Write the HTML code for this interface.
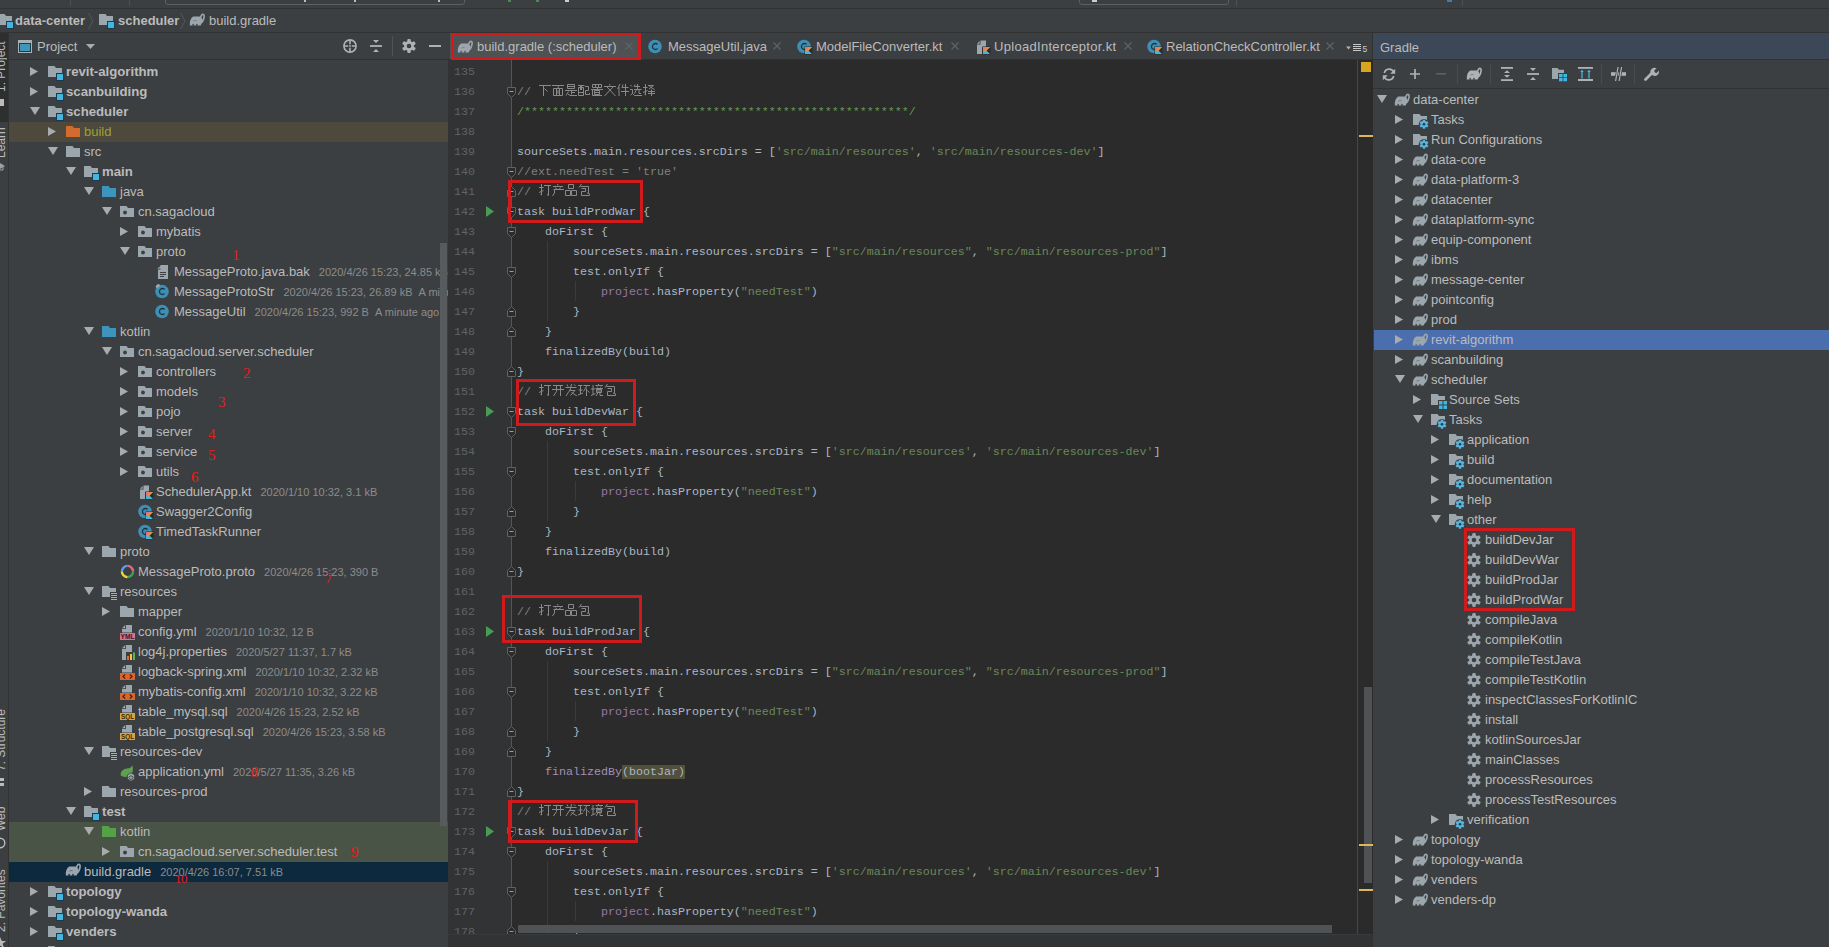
<!DOCTYPE html><html><head><meta charset="utf-8"><style>

*{margin:0;padding:0;box-sizing:border-box}
html,body{width:1829px;height:947px;overflow:hidden;background:#3c3f41;font-family:"Liberation Sans", sans-serif;}
.a{position:absolute}
.t{position:absolute;white-space:nowrap;font-size:13px;line-height:20px;height:20px;color:#bbbbbb}
.b{font-weight:bold;font-size:13.2px}
.i{font-size:11px;color:#8c8c8c}
.c{position:absolute;white-space:pre;font-family:"Liberation Mono", monospace;font-size:11.67px;line-height:20px;height:20px;color:#a9b7c6;left:517px}
.ln{position:absolute;width:40px;left:435px;text-align:right;font-family:"Liberation Mono", monospace;font-size:11.67px;line-height:20px;color:#606366}
.cj{font-size:12.7px;letter-spacing:0px} .cm{color:#808080} .dc{color:#629755} .st{color:#6a8759} .pp{color:#9876aa}
.rb{position:absolute;border:3px solid #d01a1c}
.rn{position:absolute;color:#e81c1c;font-family:"Liberation Serif",serif;font-size:15px;line-height:15px}

</style></head><body>
<div class="a" style="left:0;top:0;width:1829px;height:8px;background:#3c3f41"></div>
<div class="a" style="left:0;top:8px;width:1829px;height:1px;background:#323232"></div>
<div class="a" style="left:0;top:9px;width:1829px;height:23px;background:#3c3f41"></div>
<div class="a" style="left:0;top:32px;width:1829px;height:1px;background:#323232"></div>
<div class="a" style="left:0;top:33px;width:8px;height:914px;background:#3c3f41"></div>
<div class="a" style="left:0;top:33px;width:8px;height:89px;background:#2d2f30"></div>
<div class="a" style="left:8px;top:33px;width:1px;height:914px;background:#323232"></div>
<div class="a" style="left:9px;top:33px;width:439px;height:26px;background:#3c3f41"></div>
<div class="a" style="left:9px;top:59px;width:439px;height:1px;background:#323232"></div>
<div class="a" style="left:448px;top:33px;width:925px;height:26px;background:#3c3f41"></div>
<div class="a" style="left:448px;top:59px;width:925px;height:1px;background:#323232"></div>
<div class="a" style="left:448px;top:60px;width:64px;height:874px;background:#313335"></div>
<div class="a" style="left:512px;top:60px;width:861px;height:874px;background:#2b2b2b"></div>
<div class="a" style="left:1373px;top:33px;width:456px;height:26px;background:#3c4757"></div>
<div class="a" style="left:1373px;top:59px;width:456px;height:1px;background:#323232"></div>
<div class="a" style="left:1372px;top:33px;width:1px;height:914px;background:#323232"></div>
<div class="a" style="left:1373px;top:88px;width:456px;height:1px;background:#323232"></div>
<svg style="position:absolute;left:-2px;top:14px" width="16" height="15" viewBox="0 0 16 15"><path d="M0 0H6.5L8 2H14V11H0Z" fill="#9ca6ad"/><rect x="8.5" y="7.5" width="7" height="7" fill="#40b6e0" stroke="#1e3a4a" stroke-width="1"/></svg>
<div class="t b" style="left:15px;top:11px;font-size:13px">data-center</div>
<svg style="position:absolute;left:88px;top:12px" width="6" height="18" viewBox="0 0 6 18"><path d="M0.5 1L5 9L0.5 17" stroke="#55585a" fill="none"/></svg>
<svg style="position:absolute;left:99px;top:14px" width="16" height="15" viewBox="0 0 16 15"><path d="M0 0H6.5L8 2H14V11H0Z" fill="#9ca6ad"/><rect x="8.5" y="7.5" width="7" height="7" fill="#40b6e0" stroke="#1e3a4a" stroke-width="1"/></svg>
<div class="t b" style="left:118px;top:11px;font-size:13px">scheduler</div>
<svg style="position:absolute;left:180px;top:12px" width="6" height="18" viewBox="0 0 6 18"><path d="M0.5 1L5 9L0.5 17" stroke="#55585a" fill="none"/></svg>
<svg style="position:absolute;left:189px;top:13px" width="16" height="14" viewBox="0 0 16 14"><path d="M0.8 12.4C0.4 9 1.5 5.2 4.2 3.6L10.6 3.4C12.4 3.8 13.6 5.6 13.6 7.6L12.8 10.2L11.6 12.4Z" fill="#9ca6ad"/><path d="M11.6 4.4C12.1 2.3 13 1.2 14 1.2C15 1.3 15.3 2.6 15 4.4C14.7 6.5 14.1 8 13 9.5" fill="none" stroke="#9ca6ad" stroke-width="1.6"/><g fill="#3c3f41"><rect x="3.5" y="10.9" width="1.3" height="2"/><rect x="7.3" y="10.9" width="1.3" height="2"/></g><path d="M4.3 8.2Q5.8 7.2 7.6 7.6" stroke="#3c3f41" stroke-width="0.8" fill="none" opacity="0.5"/></svg>
<div class="t" style="left:208px;top:11px;left:209px">build.gradle</div>
<div class="a" style="left:70px;top:0;width:1px;height:6px;background:#4f5254"></div>
<div class="a" style="left:129px;top:0;width:1px;height:6px;background:#4f5254"></div>
<div class="a" style="left:165px;top:-6px;width:300px;height:11px;border:1px solid #5e6060;border-radius:3px"></div>
<div class="a" style="left:304px;top:0;width:2px;height:2px;background:#bbbbbb"></div>
<div class="a" style="left:354px;top:0;width:2px;height:2px;background:#bbbbbb"></div>
<div class="a" style="left:438px;top:0;width:2px;height:2px;background:#bbbbbb"></div>
<div class="a" style="left:508px;top:0;width:3px;height:2px;background:#4a8a4e"></div>
<div class="a" style="left:536px;top:0;width:3px;height:2px;background:#4a8a4e"></div>
<div class="a" style="left:565px;top:0;width:4px;height:2px;background:#cccccc"></div>
<div class="a" style="left:1079px;top:-6px;width:150px;height:11px;border:1px solid #5e6060;border-radius:3px"></div>
<div class="a" style="left:1092px;top:0;width:5px;height:2px;background:#cccccc"></div>
<div class="a" style="left:1447px;top:0;width:5px;height:2px;background:#3d7fa8"></div>
<div class="a" style="left:1236px;top:0;width:1px;height:6px;background:#4f5254"></div>
<div class="a" style="left:1462px;top:0;width:1px;height:6px;background:#4f5254"></div>
<div class="a" style="left:0;top:0;width:8px;height:947px;overflow:hidden">
<div class="a" style="left:-5px;top:36px;width:12px;height:56px;writing-mode:vertical-rl;transform:rotate(180deg);font-size:12px;line-height:12px;color:#bbbbbb;white-space:nowrap;overflow:hidden">1: Project</div>
<div class="a" style="left:0;top:99px;width:4px;height:7px;background:#bbbbbb"></div>
<div class="a" style="left:-5px;top:126px;width:12px;height:32px;writing-mode:vertical-rl;transform:rotate(180deg);font-size:12px;line-height:12px;color:#bbbbbb;white-space:nowrap;overflow:hidden">Learn</div>
<svg style="position:absolute;left:-6px;top:162px" width="12" height="9" viewBox="0 0 12 9"><path d="M1 4L6 1L11 4L6 7Z" fill="#a0a0a0"/><path d="M3 5V8H9V5" stroke="#a0a0a0" fill="none"/></svg>
<div class="a" style="left:-5px;top:707px;width:12px;height:64px;writing-mode:vertical-rl;transform:rotate(180deg);font-size:12px;line-height:12px;color:#bbbbbb;white-space:nowrap;overflow:hidden">7: Structure</div>
<div class="a" style="left:0;top:778px;width:4px;height:3px;background:#bbbbbb"></div><div class="a" style="left:0;top:783px;width:4px;height:3px;background:#bbbbbb"></div>
<div class="a" style="left:-5px;top:807px;width:12px;height:24px;writing-mode:vertical-rl;transform:rotate(180deg);font-size:12px;line-height:12px;color:#bbbbbb;white-space:nowrap;overflow:hidden">Web</div>
<svg style="position:absolute;left:-6px;top:837px" width="12" height="12" viewBox="0 0 12 12"><circle cx="6" cy="6" r="4.8" fill="none" stroke="#bbbbbb" stroke-width="1.4"/></svg>
<div class="a" style="left:-5px;top:868px;width:12px;height:64px;writing-mode:vertical-rl;transform:rotate(180deg);font-size:12px;line-height:12px;color:#bbbbbb;white-space:nowrap;overflow:hidden">2: Favorites</div>
<svg style="position:absolute;left:-6px;top:937px" width="12" height="12" viewBox="0 0 12 12"><path d="M6 0L7.8 4H12L8.6 6.8L10 11L6 8.5L2 11L3.4 6.8L0 4H4.2Z" fill="#bbbbbb"/></svg>
</div>
<svg style="position:absolute;left:18px;top:40px" width="14" height="13" viewBox="0 0 14 13"><rect x="0" y="0" width="14" height="13" fill="#a9b0b4"/><rect x="1" y="3" width="12" height="9" fill="#1f3a4a"/><rect x="2" y="4" width="10" height="7" fill="#3d97b8"/></svg>
<div class="t" style="left:37px;top:37px">Project</div>
<svg style="position:absolute;left:86px;top:44px" width="9" height="5" viewBox="0 0 9 5"><path d="M0 0H9L4.5 5Z" fill="#a9abad"/></svg>
<svg style="position:absolute;left:343px;top:39px" width="14" height="14" viewBox="0 0 14 14"><circle cx="7" cy="7" r="6.1" fill="none" stroke="#afb1b3" stroke-width="1.6"/><path d="M7 1V5.2M7 8.8V13M1 7H5.2M8.8 7H13" stroke="#afb1b3" stroke-width="1.6"/><circle cx="7" cy="7" r="0.9" fill="#afb1b3"/></svg>
<svg style="position:absolute;left:370px;top:39px" width="12" height="14" viewBox="0 0 12 14"><rect x="0" y="6.1" width="12" height="1.8" fill="#afb1b3"/><path d="M3 1H9L6 4Z M3 13H9L6 10Z" fill="#afb1b3"/></svg>
<div class="a" style="left:392px;top:36px;width:1px;height:20px;background:#505355"></div>
<svg style="position:absolute;left:402px;top:39px" width="14" height="14" viewBox="0 0 14 14"><circle cx="7" cy="7" r="4.9" fill="#afb1b3"/><rect x="5.3" y="0" width="3.4" height="14" rx="1" fill="#afb1b3" transform="rotate(0.0 7 7)"/><rect x="5.3" y="0" width="3.4" height="14" rx="1" fill="#afb1b3" transform="rotate(60.0 7 7)"/><rect x="5.3" y="0" width="3.4" height="14" rx="1" fill="#afb1b3" transform="rotate(120.0 7 7)"/><circle cx="7" cy="7" r="2.3" fill="#3c3f41"/></svg>
<div class="a" style="left:429px;top:45px;width:12px;height:2px;background:#afb1b3"></div>
<div class="a" style="left:9px;top:60px;width:439px;height:887px;overflow:hidden">
<div class="a" style="left:0;top:62px;width:439px;height:20px;background:#4d4a3d"></div>
<div class="a" style="left:0;top:762px;width:439px;height:40px;background:#4a5446"></div>
<div class="a" style="left:0;top:802px;width:439px;height:20px;background:#0d293e"></div>
<svg style="position:absolute;left:21px;top:7px" width="8" height="9" viewBox="0 0 8 9"><path d="M0 0L8 4.5L0 9Z" fill="#a9abad"/></svg>
<svg style="position:absolute;left:39px;top:6px" width="16" height="15" viewBox="0 0 16 15"><path d="M0 0H6.5L8 2H14V11H0Z" fill="#9ca6ad"/><rect x="8.5" y="7.5" width="7" height="7" fill="#40b6e0" stroke="#1e3a4a" stroke-width="1"/></svg>
<div class="t b" style="left:57px;top:2px;">revit-algorithm</div>
<svg style="position:absolute;left:21px;top:27px" width="8" height="9" viewBox="0 0 8 9"><path d="M0 0L8 4.5L0 9Z" fill="#a9abad"/></svg>
<svg style="position:absolute;left:39px;top:26px" width="16" height="15" viewBox="0 0 16 15"><path d="M0 0H6.5L8 2H14V11H0Z" fill="#9ca6ad"/><rect x="8.5" y="7.5" width="7" height="7" fill="#40b6e0" stroke="#1e3a4a" stroke-width="1"/></svg>
<div class="t b" style="left:57px;top:22px;">scanbuilding</div>
<svg style="position:absolute;left:21px;top:47px" width="10" height="8" viewBox="0 0 10 8"><path d="M0 0H10L5 8Z" fill="#a9abad"/></svg>
<svg style="position:absolute;left:39px;top:46px" width="16" height="15" viewBox="0 0 16 15"><path d="M0 0H6.5L8 2H14V11H0Z" fill="#9ca6ad"/><rect x="8.5" y="7.5" width="7" height="7" fill="#40b6e0" stroke="#1e3a4a" stroke-width="1"/></svg>
<div class="t b" style="left:57px;top:42px;">scheduler</div>
<svg style="position:absolute;left:39px;top:67px" width="8" height="9" viewBox="0 0 8 9"><path d="M0 0L8 4.5L0 9Z" fill="#a9abad"/></svg>
<svg style="position:absolute;left:57px;top:66px" width="14" height="11" viewBox="0 0 14 11"><path d="M0 0H6.5L8 2H14V11H0Z" fill="#d46b2e"/></svg>
<div class="t" style="left:75px;top:62px;color:#9da12e;">build</div>
<svg style="position:absolute;left:39px;top:87px" width="10" height="8" viewBox="0 0 10 8"><path d="M0 0H10L5 8Z" fill="#a9abad"/></svg>
<svg style="position:absolute;left:57px;top:86px" width="14" height="11" viewBox="0 0 14 11"><path d="M0 0H6.5L8 2H14V11H0Z" fill="#9ca6ad"/></svg>
<div class="t" style="left:75px;top:82px;">src</div>
<svg style="position:absolute;left:57px;top:107px" width="10" height="8" viewBox="0 0 10 8"><path d="M0 0H10L5 8Z" fill="#a9abad"/></svg>
<svg style="position:absolute;left:75px;top:106px" width="16" height="15" viewBox="0 0 16 15"><path d="M0 0H6.5L8 2H14V11H0Z" fill="#9ca6ad"/><rect x="8.5" y="7.5" width="7" height="7" fill="#40b6e0" stroke="#1e3a4a" stroke-width="1"/></svg>
<div class="t b" style="left:93px;top:102px;">main</div>
<svg style="position:absolute;left:75px;top:127px" width="10" height="8" viewBox="0 0 10 8"><path d="M0 0H10L5 8Z" fill="#a9abad"/></svg>
<svg style="position:absolute;left:93px;top:126px" width="14" height="11" viewBox="0 0 14 11"><path d="M0 0H6.5L8 2H14V11H0Z" fill="#3d94bd"/></svg>
<div class="t" style="left:111px;top:122px;">java</div>
<svg style="position:absolute;left:93px;top:147px" width="10" height="8" viewBox="0 0 10 8"><path d="M0 0H10L5 8Z" fill="#a9abad"/></svg>
<svg style="position:absolute;left:111px;top:146px" width="14" height="11" viewBox="0 0 14 11"><path d="M0 0H6.5L8 2H14V11H0Z" fill="#9ca6ad"/><circle cx="5" cy="6.5" r="1.9" fill="#3c3f41"/></svg>
<div class="t" style="left:129px;top:142px;">cn.sagacloud</div>
<svg style="position:absolute;left:111px;top:167px" width="8" height="9" viewBox="0 0 8 9"><path d="M0 0L8 4.5L0 9Z" fill="#a9abad"/></svg>
<svg style="position:absolute;left:129px;top:166px" width="14" height="11" viewBox="0 0 14 11"><path d="M0 0H6.5L8 2H14V11H0Z" fill="#9ca6ad"/><circle cx="5" cy="6.5" r="1.9" fill="#3c3f41"/></svg>
<div class="t" style="left:147px;top:162px;">mybatis</div>
<svg style="position:absolute;left:111px;top:187px" width="10" height="8" viewBox="0 0 10 8"><path d="M0 0H10L5 8Z" fill="#a9abad"/></svg>
<svg style="position:absolute;left:129px;top:186px" width="14" height="11" viewBox="0 0 14 11"><path d="M0 0H6.5L8 2H14V11H0Z" fill="#9ca6ad"/><circle cx="5" cy="6.5" r="1.9" fill="#3c3f41"/></svg>
<div class="t" style="left:147px;top:182px;">proto</div>
<svg style="position:absolute;left:147px;top:205px" width="14" height="14" viewBox="0 0 14 14"><path d="M4.5 0H12V14H2V4.5H4.5Z" fill="#9ca6ad"/><path d="M2 3.5L3.5 2L5.5 0V3.5Z" fill="#9ca6ad"/><path d="M2 3.6L3.6 2" stroke="#9ca6ad"/><g fill="#3c3f41"><rect x="4" y="7" width="6" height="1"/><rect x="4" y="9" width="6" height="1"/><rect x="4" y="11" width="4" height="1"/></g></svg>
<div class="t" style="left:165px;top:202px;">MessageProto.java.bak<span class="i" style="margin-left:9px">2020/4/26 15:23, 24.85 kB</span></div>
<svg style="position:absolute;left:146px;top:224px" width="16" height="16" viewBox="0 0 16 16"><circle cx="7" cy="7.5" r="6.8" fill="#3d8fb5"/><path d="M9.6 5.4A3 3 0 1 0 9.6 9.6" stroke="#20323b" stroke-width="1.3" fill="none"/><ellipse cx="2.8" cy="2" rx="2.3" ry="1.5" fill="#9ca6ad" transform="rotate(-35 2.8 2)"/></svg>
<div class="t" style="left:165px;top:222px;">MessageProtoStr<span class="i" style="margin-left:9px">2020/4/26 15:23, 26.89 kB &nbsp;A minute ago</span></div>
<svg style="position:absolute;left:146px;top:244px" width="16" height="16" viewBox="0 0 16 16"><circle cx="7" cy="7.5" r="6.8" fill="#3d8fb5"/><path d="M9.6 5.4A3 3 0 1 0 9.6 9.6" stroke="#20323b" stroke-width="1.3" fill="none"/></svg>
<div class="t" style="left:165px;top:242px;">MessageUtil<span class="i" style="margin-left:9px">2020/4/26 15:23, 992 B &nbsp;A minute ago</span></div>
<svg style="position:absolute;left:75px;top:267px" width="10" height="8" viewBox="0 0 10 8"><path d="M0 0H10L5 8Z" fill="#a9abad"/></svg>
<svg style="position:absolute;left:93px;top:266px" width="14" height="11" viewBox="0 0 14 11"><path d="M0 0H6.5L8 2H14V11H0Z" fill="#3d94bd"/></svg>
<div class="t" style="left:111px;top:262px;">kotlin</div>
<svg style="position:absolute;left:93px;top:287px" width="10" height="8" viewBox="0 0 10 8"><path d="M0 0H10L5 8Z" fill="#a9abad"/></svg>
<svg style="position:absolute;left:111px;top:286px" width="14" height="11" viewBox="0 0 14 11"><path d="M0 0H6.5L8 2H14V11H0Z" fill="#9ca6ad"/><circle cx="5" cy="6.5" r="1.9" fill="#3c3f41"/></svg>
<div class="t" style="left:129px;top:282px;">cn.sagacloud.server.scheduler</div>
<svg style="position:absolute;left:111px;top:307px" width="8" height="9" viewBox="0 0 8 9"><path d="M0 0L8 4.5L0 9Z" fill="#a9abad"/></svg>
<svg style="position:absolute;left:129px;top:306px" width="14" height="11" viewBox="0 0 14 11"><path d="M0 0H6.5L8 2H14V11H0Z" fill="#9ca6ad"/><circle cx="5" cy="6.5" r="1.9" fill="#3c3f41"/></svg>
<div class="t" style="left:147px;top:302px;">controllers</div>
<svg style="position:absolute;left:111px;top:327px" width="8" height="9" viewBox="0 0 8 9"><path d="M0 0L8 4.5L0 9Z" fill="#a9abad"/></svg>
<svg style="position:absolute;left:129px;top:326px" width="14" height="11" viewBox="0 0 14 11"><path d="M0 0H6.5L8 2H14V11H0Z" fill="#9ca6ad"/><circle cx="5" cy="6.5" r="1.9" fill="#3c3f41"/></svg>
<div class="t" style="left:147px;top:322px;">models</div>
<svg style="position:absolute;left:111px;top:347px" width="8" height="9" viewBox="0 0 8 9"><path d="M0 0L8 4.5L0 9Z" fill="#a9abad"/></svg>
<svg style="position:absolute;left:129px;top:346px" width="14" height="11" viewBox="0 0 14 11"><path d="M0 0H6.5L8 2H14V11H0Z" fill="#9ca6ad"/><circle cx="5" cy="6.5" r="1.9" fill="#3c3f41"/></svg>
<div class="t" style="left:147px;top:342px;">pojo</div>
<svg style="position:absolute;left:111px;top:367px" width="8" height="9" viewBox="0 0 8 9"><path d="M0 0L8 4.5L0 9Z" fill="#a9abad"/></svg>
<svg style="position:absolute;left:129px;top:366px" width="14" height="11" viewBox="0 0 14 11"><path d="M0 0H6.5L8 2H14V11H0Z" fill="#9ca6ad"/><circle cx="5" cy="6.5" r="1.9" fill="#3c3f41"/></svg>
<div class="t" style="left:147px;top:362px;">server</div>
<svg style="position:absolute;left:111px;top:387px" width="8" height="9" viewBox="0 0 8 9"><path d="M0 0L8 4.5L0 9Z" fill="#a9abad"/></svg>
<svg style="position:absolute;left:129px;top:386px" width="14" height="11" viewBox="0 0 14 11"><path d="M0 0H6.5L8 2H14V11H0Z" fill="#9ca6ad"/><circle cx="5" cy="6.5" r="1.9" fill="#3c3f41"/></svg>
<div class="t" style="left:147px;top:382px;">service</div>
<svg style="position:absolute;left:111px;top:407px" width="8" height="9" viewBox="0 0 8 9"><path d="M0 0L8 4.5L0 9Z" fill="#a9abad"/></svg>
<svg style="position:absolute;left:129px;top:406px" width="14" height="11" viewBox="0 0 14 11"><path d="M0 0H6.5L8 2H14V11H0Z" fill="#9ca6ad"/><circle cx="5" cy="6.5" r="1.9" fill="#3c3f41"/></svg>
<div class="t" style="left:147px;top:402px;">utils</div>
<svg style="position:absolute;left:129px;top:424px" width="16" height="16" viewBox="0 0 16 16"><path d="M5.5 1.5H11V8H7V15H2V5.5H5.5Z" fill="#9ca6ad"/><path d="M2 4.7L4.7 2V4.7Z" fill="#9ca6ad"/><rect x="7.5" y="7.5" width="8" height="8" fill="#2b2b2b"/><path d="M8 8H15L11.5 11.5L15 15H8Z" fill="#40b6e0"/><path d="M8 8H12L8 12Z" fill="#e3708a"/><path d="M12 8H15L10 13L8.5 11.5Z" fill="#f08a2c"/></svg>
<div class="t" style="left:147px;top:422px;">SchedulerApp.kt<span class="i" style="margin-left:9px">2020/1/10 10:32, 3.1 kB</span></div>
<svg style="position:absolute;left:129px;top:444px" width="16" height="16" viewBox="0 0 16 16"><circle cx="7" cy="7.5" r="6.8" fill="#3d8fb5"/><path d="M9.6 5.4A3 3 0 1 0 9.6 9.6" stroke="#20323b" stroke-width="1.3" fill="none"/><rect x="7.5" y="7.5" width="8" height="8" fill="#2b2b2b"/><path d="M8 8H15L11.5 11.5L15 15H8Z" fill="#40b6e0"/><path d="M8 8H12L8 12Z" fill="#e3708a"/><path d="M12 8H15L10 13L8.5 11.5Z" fill="#f08a2c"/></svg>
<div class="t" style="left:147px;top:442px;">Swagger2Config</div>
<svg style="position:absolute;left:129px;top:464px" width="16" height="16" viewBox="0 0 16 16"><circle cx="7" cy="7.5" r="6.8" fill="#3d8fb5"/><path d="M9.6 5.4A3 3 0 1 0 9.6 9.6" stroke="#20323b" stroke-width="1.3" fill="none"/><rect x="7.5" y="7.5" width="8" height="8" fill="#2b2b2b"/><path d="M8 8H15L11.5 11.5L15 15H8Z" fill="#40b6e0"/><path d="M8 8H12L8 12Z" fill="#e3708a"/><path d="M12 8H15L10 13L8.5 11.5Z" fill="#f08a2c"/></svg>
<div class="t" style="left:147px;top:462px;">TimedTaskRunner</div>
<svg style="position:absolute;left:75px;top:487px" width="10" height="8" viewBox="0 0 10 8"><path d="M0 0H10L5 8Z" fill="#a9abad"/></svg>
<svg style="position:absolute;left:93px;top:486px" width="14" height="11" viewBox="0 0 14 11"><path d="M0 0H6.5L8 2H14V11H0Z" fill="#9ca6ad"/></svg>
<div class="t" style="left:111px;top:482px;">proto</div>
<svg style="position:absolute;left:111px;top:504px" width="15" height="15" viewBox="0 0 15 15"><path d="M1.9000000000000004 7.5A5.6 5.6 0 0 1 7.5 1.9000000000000004" stroke="#5a9ee8" stroke-width="2.4" fill="none"/><path d="M7.5 1.9000000000000004A5.6 5.6 0 0 1 13.1 7.5" stroke="#e06a78" stroke-width="2.4" fill="none"/><path d="M13.1 7.5A5.6 5.6 0 0 1 7.5 13.1" stroke="#3fa14f" stroke-width="2.4" fill="none"/><path d="M7.5 13.1A5.6 5.6 0 0 1 1.9000000000000004 7.5" stroke="#f0d43a" stroke-width="2.4" fill="none"/></svg>
<div class="t" style="left:129px;top:502px;">MessageProto.proto<span class="i" style="margin-left:9px">2020/4/26 15:23, 390 B</span></div>
<svg style="position:absolute;left:75px;top:527px" width="10" height="8" viewBox="0 0 10 8"><path d="M0 0H10L5 8Z" fill="#a9abad"/></svg>
<svg style="position:absolute;left:93px;top:526px" width="16" height="15" viewBox="0 0 16 15"><path d="M0 0H6.5L8 2H14V11H0Z" fill="#9ca6ad"/><rect x="8" y="6" width="8" height="9" fill="#3c3f41"/><g fill="#e8a33a"><rect x="9" y="7" width="6" height="1"/><rect x="9" y="9" width="6" height="1"/><rect x="9" y="11" width="6" height="1"/><rect x="9" y="13" width="6" height="1"/></g></svg>
<div class="t" style="left:111px;top:522px;">resources</div>
<svg style="position:absolute;left:93px;top:547px" width="8" height="9" viewBox="0 0 8 9"><path d="M0 0L8 4.5L0 9Z" fill="#a9abad"/></svg>
<svg style="position:absolute;left:111px;top:546px" width="14" height="11" viewBox="0 0 14 11"><path d="M0 0H6.5L8 2H14V11H0Z" fill="#9ca6ad"/></svg>
<div class="t" style="left:129px;top:542px;">mapper</div>
<svg style="position:absolute;left:111px;top:563px" width="16" height="18" viewBox="0 0 16 18"><path d="M6 2H12V9.5H2V6H6Z" fill="#9ca6ad"/><path d="M2 5.2L5.2 2V5.2Z" fill="#9ca6ad"/><rect x="0" y="10" width="15" height="7" fill="#d9738b"/><text x="7.5" y="16.4" font-family="Liberation Sans" font-size="7" font-weight="bold" text-anchor="middle" fill="#4a1020" textLength="14" lengthAdjust="spacingAndGlyphs">YML</text></svg>
<div class="t" style="left:129px;top:562px;">config.yml<span class="i" style="margin-left:9px">2020/1/10 10:32, 12 B</span></div>
<svg style="position:absolute;left:111px;top:583px" width="16" height="18" viewBox="0 0 16 18"><path d="M6 2H12V17H2V6H6Z" fill="#9ca6ad"/><path d="M2 5.2L5.2 2V5.2Z" fill="#9ca6ad"/><rect x="6" y="9" width="10" height="9" fill="#3c3f41"/><rect x="7" y="13" width="2" height="4" fill="#e06b3c"/><rect x="10" y="11" width="2" height="6" fill="#f4c53d"/><rect x="13" y="9.5" width="2" height="7.5" fill="#62b543"/></svg>
<div class="t" style="left:129px;top:582px;">log4j.properties<span class="i" style="margin-left:9px">2020/5/27 11:37, 1.7 kB</span></div>
<svg style="position:absolute;left:111px;top:603px" width="16" height="18" viewBox="0 0 16 18"><path d="M6 2H12V9.5H2V6H6Z" fill="#9ca6ad"/><path d="M2 5.2L5.2 2V5.2Z" fill="#9ca6ad"/><rect x="0" y="10" width="15" height="7" fill="#d9642c"/><path d="M5.2 11.3L3 13.5L5.2 15.7M9.8 11.3L12 13.5L9.8 15.7" stroke="#3a1a08" stroke-width="1.1" fill="none"/></svg>
<div class="t" style="left:129px;top:602px;">logback-spring.xml<span class="i" style="margin-left:9px">2020/1/10 10:32, 2.32 kB</span></div>
<svg style="position:absolute;left:111px;top:623px" width="16" height="18" viewBox="0 0 16 18"><path d="M6 2H12V9.5H2V6H6Z" fill="#9ca6ad"/><path d="M2 5.2L5.2 2V5.2Z" fill="#9ca6ad"/><rect x="0" y="10" width="15" height="7" fill="#d9642c"/><path d="M5.2 11.3L3 13.5L5.2 15.7M9.8 11.3L12 13.5L9.8 15.7" stroke="#3a1a08" stroke-width="1.1" fill="none"/></svg>
<div class="t" style="left:129px;top:622px;">mybatis-config.xml<span class="i" style="margin-left:9px">2020/1/10 10:32, 3.22 kB</span></div>
<svg style="position:absolute;left:111px;top:643px" width="16" height="18" viewBox="0 0 16 18"><path d="M6 2H12V9.5H2V6H6Z" fill="#9ca6ad"/><path d="M2 5.2L5.2 2V5.2Z" fill="#9ca6ad"/><rect x="0" y="10" width="15" height="7" fill="#d9a343"/><text x="7.5" y="16.4" font-family="Liberation Sans" font-size="7" font-weight="bold" text-anchor="middle" fill="#3a2800" textLength="13" lengthAdjust="spacingAndGlyphs">SQL</text></svg>
<div class="t" style="left:129px;top:642px;">table_mysql.sql<span class="i" style="margin-left:9px">2020/4/26 15:23, 2.52 kB</span></div>
<svg style="position:absolute;left:111px;top:663px" width="16" height="18" viewBox="0 0 16 18"><path d="M6 2H12V9.5H2V6H6Z" fill="#9ca6ad"/><path d="M2 5.2L5.2 2V5.2Z" fill="#9ca6ad"/><rect x="0" y="10" width="15" height="7" fill="#d9a343"/><text x="7.5" y="16.4" font-family="Liberation Sans" font-size="7" font-weight="bold" text-anchor="middle" fill="#3a2800" textLength="13" lengthAdjust="spacingAndGlyphs">SQL</text></svg>
<div class="t" style="left:129px;top:662px;">table_postgresql.sql<span class="i" style="margin-left:9px">2020/4/26 15:23, 3.58 kB</span></div>
<svg style="position:absolute;left:75px;top:687px" width="10" height="8" viewBox="0 0 10 8"><path d="M0 0H10L5 8Z" fill="#a9abad"/></svg>
<svg style="position:absolute;left:93px;top:686px" width="16" height="15" viewBox="0 0 16 15"><path d="M0 0H6.5L8 2H14V11H0Z" fill="#9ca6ad"/><rect x="8" y="6" width="8" height="9" fill="#3c3f41"/><g fill="#e8a33a"><rect x="9" y="7" width="6" height="1"/><rect x="9" y="9" width="6" height="1"/><rect x="9" y="11" width="6" height="1"/><rect x="9" y="13" width="6" height="1"/></g></svg>
<div class="t" style="left:111px;top:682px;">resources-dev</div>
<svg style="position:absolute;left:111px;top:705px" width="16" height="17" viewBox="0 0 16 17"><path d="M0.8 10.5C0.2 6.8 3 4 7 3.6C9.5 3.4 11 2.5 12.5 0.5C13.6 4.5 12.8 8.8 9.5 10.8C6.8 12.4 3 12.3 0.8 10.5Z" fill="#5fa04e"/><path d="M11 7.8L14.6 9.9V14.1L11 16.2L7.4 14.1V9.9Z" fill="#9ca6ad" stroke="#3c3f41" stroke-width="0.8"/><path d="M9.6 11A2 2 0 1 0 12.4 11" stroke="#3c3f41" stroke-width="0.9" fill="none"/><path d="M11 10V12" stroke="#3c3f41" stroke-width="0.9"/></svg>
<div class="t" style="left:129px;top:702px;">application.yml<span class="i" style="margin-left:9px">2020/5/27 11:35, 3.26 kB</span></div>
<svg style="position:absolute;left:75px;top:727px" width="8" height="9" viewBox="0 0 8 9"><path d="M0 0L8 4.5L0 9Z" fill="#a9abad"/></svg>
<svg style="position:absolute;left:93px;top:726px" width="14" height="11" viewBox="0 0 14 11"><path d="M0 0H6.5L8 2H14V11H0Z" fill="#9ca6ad"/></svg>
<div class="t" style="left:111px;top:722px;">resources-prod</div>
<svg style="position:absolute;left:57px;top:747px" width="10" height="8" viewBox="0 0 10 8"><path d="M0 0H10L5 8Z" fill="#a9abad"/></svg>
<svg style="position:absolute;left:75px;top:746px" width="16" height="15" viewBox="0 0 16 15"><path d="M0 0H6.5L8 2H14V11H0Z" fill="#9ca6ad"/><rect x="8.5" y="7.5" width="7" height="7" fill="#40b6e0" stroke="#1e3a4a" stroke-width="1"/></svg>
<div class="t b" style="left:93px;top:742px;">test</div>
<svg style="position:absolute;left:75px;top:767px" width="10" height="8" viewBox="0 0 10 8"><path d="M0 0H10L5 8Z" fill="#a9abad"/></svg>
<svg style="position:absolute;left:93px;top:766px" width="14" height="11" viewBox="0 0 14 11"><path d="M0 0H6.5L8 2H14V11H0Z" fill="#54a245"/></svg>
<div class="t" style="left:111px;top:762px;">kotlin</div>
<svg style="position:absolute;left:93px;top:787px" width="8" height="9" viewBox="0 0 8 9"><path d="M0 0L8 4.5L0 9Z" fill="#a9abad"/></svg>
<svg style="position:absolute;left:111px;top:786px" width="14" height="11" viewBox="0 0 14 11"><path d="M0 0H6.5L8 2H14V11H0Z" fill="#9ca6ad"/><circle cx="5" cy="6.5" r="1.9" fill="#3c3f41"/></svg>
<div class="t" style="left:129px;top:782px;">cn.sagacloud.server.scheduler.test</div>
<svg style="position:absolute;left:56px;top:803px" width="16" height="14" viewBox="0 0 16 14"><path d="M0.8 12.4C0.4 9 1.5 5.2 4.2 3.6L10.6 3.4C12.4 3.8 13.6 5.6 13.6 7.6L12.8 10.2L11.6 12.4Z" fill="#9ca6ad"/><path d="M11.6 4.4C12.1 2.3 13 1.2 14 1.2C15 1.3 15.3 2.6 15 4.4C14.7 6.5 14.1 8 13 9.5" fill="none" stroke="#9ca6ad" stroke-width="1.6"/><g fill="#0d293e"><rect x="3.5" y="10.9" width="1.3" height="2"/><rect x="7.3" y="10.9" width="1.3" height="2"/></g><path d="M4.3 8.2Q5.8 7.2 7.6 7.6" stroke="#0d293e" stroke-width="0.8" fill="none" opacity="0.5"/></svg>
<div class="t" style="left:75px;top:802px;">build.gradle<span class="i" style="margin-left:9px">2020/4/26 16:07, 7.51 kB</span></div>
<svg style="position:absolute;left:21px;top:827px" width="8" height="9" viewBox="0 0 8 9"><path d="M0 0L8 4.5L0 9Z" fill="#a9abad"/></svg>
<svg style="position:absolute;left:39px;top:826px" width="16" height="15" viewBox="0 0 16 15"><path d="M0 0H6.5L8 2H14V11H0Z" fill="#9ca6ad"/><rect x="8.5" y="7.5" width="7" height="7" fill="#40b6e0" stroke="#1e3a4a" stroke-width="1"/></svg>
<div class="t b" style="left:57px;top:822px;">topology</div>
<svg style="position:absolute;left:21px;top:847px" width="8" height="9" viewBox="0 0 8 9"><path d="M0 0L8 4.5L0 9Z" fill="#a9abad"/></svg>
<svg style="position:absolute;left:39px;top:846px" width="16" height="15" viewBox="0 0 16 15"><path d="M0 0H6.5L8 2H14V11H0Z" fill="#9ca6ad"/><rect x="8.5" y="7.5" width="7" height="7" fill="#40b6e0" stroke="#1e3a4a" stroke-width="1"/></svg>
<div class="t b" style="left:57px;top:842px;">topology-wanda</div>
<svg style="position:absolute;left:21px;top:867px" width="8" height="9" viewBox="0 0 8 9"><path d="M0 0L8 4.5L0 9Z" fill="#a9abad"/></svg>
<svg style="position:absolute;left:39px;top:866px" width="16" height="15" viewBox="0 0 16 15"><path d="M0 0H6.5L8 2H14V11H0Z" fill="#9ca6ad"/><rect x="8.5" y="7.5" width="7" height="7" fill="#40b6e0" stroke="#1e3a4a" stroke-width="1"/></svg>
<div class="t b" style="left:57px;top:862px;">venders</div>
<svg style="position:absolute;left:21px;top:887px" width="8" height="9" viewBox="0 0 8 9"><path d="M0 0L8 4.5L0 9Z" fill="#a9abad"/></svg>
<svg style="position:absolute;left:39px;top:886px" width="16" height="15" viewBox="0 0 16 15"><path d="M0 0H6.5L8 2H14V11H0Z" fill="#9ca6ad"/><rect x="8.5" y="7.5" width="7" height="7" fill="#40b6e0" stroke="#1e3a4a" stroke-width="1"/></svg>
<div class="t b" style="left:57px;top:882px;">venders-dp</div>
</div>
<div class="a" style="left:440px;top:243px;width:7px;height:583px;background:#585b5d"></div>
<div class="a" style="left:450px;top:33px;width:190px;height:26px;background:#4e5254"></div>
<svg style="position:absolute;left:457px;top:40px" width="16" height="14" viewBox="0 0 16 14"><path d="M0.8 12.4C0.4 9 1.5 5.2 4.2 3.6L10.6 3.4C12.4 3.8 13.6 5.6 13.6 7.6L12.8 10.2L11.6 12.4Z" fill="#9ca6ad"/><path d="M11.6 4.4C12.1 2.3 13 1.2 14 1.2C15 1.3 15.3 2.6 15 4.4C14.7 6.5 14.1 8 13 9.5" fill="none" stroke="#9ca6ad" stroke-width="1.6"/><g fill="#4e5254"><rect x="3.5" y="10.9" width="1.3" height="2"/><rect x="7.3" y="10.9" width="1.3" height="2"/></g><path d="M4.3 8.2Q5.8 7.2 7.6 7.6" stroke="#4e5254" stroke-width="0.8" fill="none" opacity="0.5"/></svg>
<div class="t" style="left:477px;top:37px">build.gradle (:scheduler)</div>
<svg style="position:absolute;left:625px;top:42px" width="8" height="8" viewBox="0 0 8 8"><path d="M0.5 0.5L7.5 7.5M7.5 0.5L0.5 7.5" stroke="#616467" stroke-width="1.1"/></svg>
<svg style="position:absolute;left:648px;top:39px" width="16" height="16" viewBox="0 0 16 16"><circle cx="7" cy="7.5" r="6.8" fill="#3d8fb5"/><path d="M9.6 5.4A3 3 0 1 0 9.6 9.6" stroke="#20323b" stroke-width="1.3" fill="none"/></svg>
<div class="t" style="left:668px;top:37px">MessageUtil.java</div>
<svg style="position:absolute;left:773px;top:42px" width="8" height="8" viewBox="0 0 8 8"><path d="M0.5 0.5L7.5 7.5M7.5 0.5L0.5 7.5" stroke="#616467" stroke-width="1.1"/></svg>
<svg style="position:absolute;left:797px;top:39px" width="16" height="16" viewBox="0 0 16 16"><circle cx="7" cy="7.5" r="6.8" fill="#3d8fb5"/><path d="M9.6 5.4A3 3 0 1 0 9.6 9.6" stroke="#20323b" stroke-width="1.3" fill="none"/><rect x="7.5" y="7.5" width="8" height="8" fill="#2b2b2b"/><path d="M8 8H15L11.5 11.5L15 15H8Z" fill="#40b6e0"/><path d="M8 8H12L8 12Z" fill="#e3708a"/><path d="M12 8H15L10 13L8.5 11.5Z" fill="#f08a2c"/></svg>
<div class="t" style="left:816px;top:37px">ModelFileConverter.kt</div>
<svg style="position:absolute;left:951px;top:42px" width="8" height="8" viewBox="0 0 8 8"><path d="M0.5 0.5L7.5 7.5M7.5 0.5L0.5 7.5" stroke="#616467" stroke-width="1.1"/></svg>
<svg style="position:absolute;left:975px;top:39px" width="16" height="16" viewBox="0 0 16 16"><path d="M5.5 1.5H11V8H7V15H2V5.5H5.5Z" fill="#9ca6ad"/><path d="M2 4.7L4.7 2V4.7Z" fill="#9ca6ad"/><rect x="7.5" y="7.5" width="8" height="8" fill="#2b2b2b"/><path d="M8 8H15L11.5 11.5L15 15H8Z" fill="#40b6e0"/><path d="M8 8H12L8 12Z" fill="#e3708a"/><path d="M12 8H15L10 13L8.5 11.5Z" fill="#f08a2c"/></svg>
<div class="t" style="left:994px;top:37px;letter-spacing:0.3px">UploadInterceptor.kt</div>
<svg style="position:absolute;left:1124px;top:42px" width="8" height="8" viewBox="0 0 8 8"><path d="M0.5 0.5L7.5 7.5M7.5 0.5L0.5 7.5" stroke="#616467" stroke-width="1.1"/></svg>
<svg style="position:absolute;left:1147px;top:39px" width="16" height="16" viewBox="0 0 16 16"><circle cx="7" cy="7.5" r="6.8" fill="#3d8fb5"/><path d="M9.6 5.4A3 3 0 1 0 9.6 9.6" stroke="#20323b" stroke-width="1.3" fill="none"/><rect x="7.5" y="7.5" width="8" height="8" fill="#2b2b2b"/><path d="M8 8H15L11.5 11.5L15 15H8Z" fill="#40b6e0"/><path d="M8 8H12L8 12Z" fill="#e3708a"/><path d="M12 8H15L10 13L8.5 11.5Z" fill="#f08a2c"/></svg>
<div class="t" style="left:1166px;top:37px">RelationCheckController.kt</div>
<svg style="position:absolute;left:1326px;top:42px" width="8" height="8" viewBox="0 0 8 8"><path d="M0.5 0.5L7.5 7.5M7.5 0.5L0.5 7.5" stroke="#616467" stroke-width="1.1"/></svg>
<svg style="position:absolute;left:1346px;top:42px" width="24" height="11" viewBox="0 0 24 11"><path d="M0 4.5H5L2.5 7.5Z" fill="#afb1b3"/><path d="M7 2.5H15M7 4.5H15M7 6.5H15M7 8.5H15" stroke="#c8c8c8" stroke-width="1"/><text x="16.5" y="10" font-family="Liberation Sans" font-size="8.5" fill="#c8c8c8">5</text></svg>
<div class="rb" style="left:451px;top:33px;width:190px;height:27px"></div>
<div class="a" style="left:511px;top:60px;width:1px;height:874px;background:#555555"></div>
<div class="a" style="left:448px;top:60px;width:909px;height:874px;overflow:hidden">
<div class="ln" style="left:-13px;top:2px">135</div>
<div class="ln" style="left:-13px;top:22px">136</div>
<div class="c" style="left:69px;top:22px"><span class="cm">// </span></div>
<div class="ln" style="left:-13px;top:42px">137</div>
<div class="c" style="left:69px;top:42px"><span class="dc">/*******************************************************/</span></div>
<div class="ln" style="left:-13px;top:62px">138</div>
<div class="ln" style="left:-13px;top:82px">139</div>
<div class="c" style="left:69px;top:82px">sourceSets.main.resources.srcDirs = [<span class=st>'src/main/resources'</span>, <span class=st>'src/main/resources-dev'</span>]</div>
<div class="ln" style="left:-13px;top:102px">140</div>
<div class="c" style="left:69px;top:102px"><span class=cm>//ext.needTest = 'true'</span></div>
<div class="ln" style="left:-13px;top:122px">141</div>
<div class="c" style="left:69px;top:122px"><span class=cm>// </span></div>
<div class="ln" style="left:-13px;top:142px">142</div>
<div class="c" style="left:69px;top:142px">task buildProdWar {</div>
<div class="ln" style="left:-13px;top:162px">143</div>
<div class="c" style="left:69px;top:162px">    doFirst {</div>
<div class="ln" style="left:-13px;top:182px">144</div>
<div class="c" style="left:69px;top:182px">        sourceSets.main.resources.srcDirs = [<span class=st>"src/main/resources"</span>, <span class=st>"src/main/resources-prod"</span>]</div>
<div class="ln" style="left:-13px;top:202px">145</div>
<div class="c" style="left:69px;top:202px">        test.onlyIf {</div>
<div class="ln" style="left:-13px;top:222px">146</div>
<div class="c" style="left:69px;top:222px">            <span class=pp>project</span>.hasProperty(<span class=st>"needTest"</span>)</div>
<div class="ln" style="left:-13px;top:242px">147</div>
<div class="c" style="left:69px;top:242px">        }</div>
<div class="ln" style="left:-13px;top:262px">148</div>
<div class="c" style="left:69px;top:262px">    }</div>
<div class="ln" style="left:-13px;top:282px">149</div>
<div class="c" style="left:69px;top:282px">    finalizedBy(build)</div>
<div class="ln" style="left:-13px;top:302px">150</div>
<div class="c" style="left:69px;top:302px">}</div>
<div class="ln" style="left:-13px;top:322px">151</div>
<div class="c" style="left:69px;top:322px"><span class=cm>// </span></div>
<div class="ln" style="left:-13px;top:342px">152</div>
<div class="c" style="left:69px;top:342px">task buildDevWar {</div>
<div class="ln" style="left:-13px;top:362px">153</div>
<div class="c" style="left:69px;top:362px">    doFirst {</div>
<div class="ln" style="left:-13px;top:382px">154</div>
<div class="c" style="left:69px;top:382px">        sourceSets.main.resources.srcDirs = [<span class=st>'src/main/resources'</span>, <span class=st>'src/main/resources-dev'</span>]</div>
<div class="ln" style="left:-13px;top:402px">155</div>
<div class="c" style="left:69px;top:402px">        test.onlyIf {</div>
<div class="ln" style="left:-13px;top:422px">156</div>
<div class="c" style="left:69px;top:422px">            <span class=pp>project</span>.hasProperty(<span class=st>"needTest"</span>)</div>
<div class="ln" style="left:-13px;top:442px">157</div>
<div class="c" style="left:69px;top:442px">        }</div>
<div class="ln" style="left:-13px;top:462px">158</div>
<div class="c" style="left:69px;top:462px">    }</div>
<div class="ln" style="left:-13px;top:482px">159</div>
<div class="c" style="left:69px;top:482px">    finalizedBy(build)</div>
<div class="ln" style="left:-13px;top:502px">160</div>
<div class="c" style="left:69px;top:502px">}</div>
<div class="ln" style="left:-13px;top:522px">161</div>
<div class="ln" style="left:-13px;top:542px">162</div>
<div class="c" style="left:69px;top:542px"><span class=cm>// </span></div>
<div class="ln" style="left:-13px;top:562px">163</div>
<div class="c" style="left:69px;top:562px">task buildProdJar {</div>
<div class="ln" style="left:-13px;top:582px">164</div>
<div class="c" style="left:69px;top:582px">    doFirst {</div>
<div class="ln" style="left:-13px;top:602px">165</div>
<div class="c" style="left:69px;top:602px">        sourceSets.main.resources.srcDirs = [<span class=st>"src/main/resources"</span>, <span class=st>"src/main/resources-prod"</span>]</div>
<div class="ln" style="left:-13px;top:622px">166</div>
<div class="c" style="left:69px;top:622px">        test.onlyIf {</div>
<div class="ln" style="left:-13px;top:642px">167</div>
<div class="c" style="left:69px;top:642px">            <span class=pp>project</span>.hasProperty(<span class=st>"needTest"</span>)</div>
<div class="ln" style="left:-13px;top:662px">168</div>
<div class="c" style="left:69px;top:662px">        }</div>
<div class="ln" style="left:-13px;top:682px">169</div>
<div class="c" style="left:69px;top:682px">    }</div>
<div class="ln" style="left:-13px;top:702px">170</div>
<div class="c" style="left:69px;top:702px">    <span style="color:#a38fb6">finalizedBy</span><span style="background:#52503a">(bootJar)</span></div>
<div class="ln" style="left:-13px;top:722px">171</div>
<div class="c" style="left:69px;top:722px">}</div>
<div class="ln" style="left:-13px;top:742px">172</div>
<div class="c" style="left:69px;top:742px"><span class=cm>// </span></div>
<div class="ln" style="left:-13px;top:762px">173</div>
<div class="c" style="left:69px;top:762px">task buildDevJar {</div>
<div class="ln" style="left:-13px;top:782px">174</div>
<div class="c" style="left:69px;top:782px">    doFirst {</div>
<div class="ln" style="left:-13px;top:802px">175</div>
<div class="c" style="left:69px;top:802px">        sourceSets.main.resources.srcDirs = [<span class=st>'src/main/resources'</span>, <span class=st>'src/main/resources-dev'</span>]</div>
<div class="ln" style="left:-13px;top:822px">176</div>
<div class="c" style="left:69px;top:822px">        test.onlyIf {</div>
<div class="ln" style="left:-13px;top:842px">177</div>
<div class="c" style="left:69px;top:842px">            <span class=pp>project</span>.hasProperty(<span class=st>"needTest"</span>)</div>
<div class="ln" style="left:-13px;top:862px">178</div>
<div class="c" style="left:69px;top:862px">        }</div>
</div>
<div class="a" style="left:547px;top:241px;width:1px;height:80px;background:#3b3b3b"></div>
<div class="a" style="left:575px;top:281px;width:1px;height:20px;background:#3b3b3b"></div>
<div class="a" style="left:547px;top:441px;width:1px;height:80px;background:#3b3b3b"></div>
<div class="a" style="left:575px;top:481px;width:1px;height:20px;background:#3b3b3b"></div>
<div class="a" style="left:547px;top:661px;width:1px;height:80px;background:#3b3b3b"></div>
<div class="a" style="left:575px;top:701px;width:1px;height:20px;background:#3b3b3b"></div>
<div class="a" style="left:547px;top:861px;width:1px;height:80px;background:#3b3b3b"></div>
<div class="a" style="left:575px;top:901px;width:1px;height:20px;background:#3b3b3b"></div>
<svg style="position:absolute;left:507px;top:87px" width="9" height="11" viewBox="0 0 9 11"><path d="M0.5 0.5H8.5V6.5L4.5 10.5L0.5 6.5Z" fill="#2b2b2b" stroke="#5f6164"/><path d="M2.5 4.5H6.5" stroke="#9a9a9a" stroke-width="1"/></svg>
<svg style="position:absolute;left:507px;top:167px" width="9" height="11" viewBox="0 0 9 11"><path d="M0.5 0.5H8.5V6.5L4.5 10.5L0.5 6.5Z" fill="#2b2b2b" stroke="#5f6164"/><path d="M2.5 4.5H6.5" stroke="#9a9a9a" stroke-width="1"/></svg>
<svg style="position:absolute;left:507px;top:186px" width="9" height="11" viewBox="0 0 9 11"><path d="M0.5 10.5H8.5V4.5L4.5 0.5L0.5 4.5Z" fill="#2b2b2b" stroke="#5f6164"/><path d="M2.5 5.5H6.5" stroke="#9a9a9a" stroke-width="1"/></svg>
<svg style="position:absolute;left:507px;top:207px" width="9" height="11" viewBox="0 0 9 11"><path d="M0.5 0.5H8.5V6.5L4.5 10.5L0.5 6.5Z" fill="#2b2b2b" stroke="#5f6164"/><path d="M2.5 4.5H6.5" stroke="#9a9a9a" stroke-width="1"/></svg>
<svg style="position:absolute;left:507px;top:227px" width="9" height="11" viewBox="0 0 9 11"><path d="M0.5 0.5H8.5V6.5L4.5 10.5L0.5 6.5Z" fill="#2b2b2b" stroke="#5f6164"/><path d="M2.5 4.5H6.5" stroke="#9a9a9a" stroke-width="1"/></svg>
<svg style="position:absolute;left:507px;top:267px" width="9" height="11" viewBox="0 0 9 11"><path d="M0.5 0.5H8.5V6.5L4.5 10.5L0.5 6.5Z" fill="#2b2b2b" stroke="#5f6164"/><path d="M2.5 4.5H6.5" stroke="#9a9a9a" stroke-width="1"/></svg>
<svg style="position:absolute;left:507px;top:306px" width="9" height="11" viewBox="0 0 9 11"><path d="M0.5 10.5H8.5V4.5L4.5 0.5L0.5 4.5Z" fill="#2b2b2b" stroke="#5f6164"/><path d="M2.5 5.5H6.5" stroke="#9a9a9a" stroke-width="1"/></svg>
<svg style="position:absolute;left:507px;top:326px" width="9" height="11" viewBox="0 0 9 11"><path d="M0.5 10.5H8.5V4.5L4.5 0.5L0.5 4.5Z" fill="#2b2b2b" stroke="#5f6164"/><path d="M2.5 5.5H6.5" stroke="#9a9a9a" stroke-width="1"/></svg>
<svg style="position:absolute;left:507px;top:366px" width="9" height="11" viewBox="0 0 9 11"><path d="M0.5 10.5H8.5V4.5L4.5 0.5L0.5 4.5Z" fill="#2b2b2b" stroke="#5f6164"/><path d="M2.5 5.5H6.5" stroke="#9a9a9a" stroke-width="1"/></svg>
<svg style="position:absolute;left:507px;top:407px" width="9" height="11" viewBox="0 0 9 11"><path d="M0.5 0.5H8.5V6.5L4.5 10.5L0.5 6.5Z" fill="#2b2b2b" stroke="#5f6164"/><path d="M2.5 4.5H6.5" stroke="#9a9a9a" stroke-width="1"/></svg>
<svg style="position:absolute;left:507px;top:427px" width="9" height="11" viewBox="0 0 9 11"><path d="M0.5 0.5H8.5V6.5L4.5 10.5L0.5 6.5Z" fill="#2b2b2b" stroke="#5f6164"/><path d="M2.5 4.5H6.5" stroke="#9a9a9a" stroke-width="1"/></svg>
<svg style="position:absolute;left:507px;top:467px" width="9" height="11" viewBox="0 0 9 11"><path d="M0.5 0.5H8.5V6.5L4.5 10.5L0.5 6.5Z" fill="#2b2b2b" stroke="#5f6164"/><path d="M2.5 4.5H6.5" stroke="#9a9a9a" stroke-width="1"/></svg>
<svg style="position:absolute;left:507px;top:506px" width="9" height="11" viewBox="0 0 9 11"><path d="M0.5 10.5H8.5V4.5L4.5 0.5L0.5 4.5Z" fill="#2b2b2b" stroke="#5f6164"/><path d="M2.5 5.5H6.5" stroke="#9a9a9a" stroke-width="1"/></svg>
<svg style="position:absolute;left:507px;top:526px" width="9" height="11" viewBox="0 0 9 11"><path d="M0.5 10.5H8.5V4.5L4.5 0.5L0.5 4.5Z" fill="#2b2b2b" stroke="#5f6164"/><path d="M2.5 5.5H6.5" stroke="#9a9a9a" stroke-width="1"/></svg>
<svg style="position:absolute;left:507px;top:566px" width="9" height="11" viewBox="0 0 9 11"><path d="M0.5 10.5H8.5V4.5L4.5 0.5L0.5 4.5Z" fill="#2b2b2b" stroke="#5f6164"/><path d="M2.5 5.5H6.5" stroke="#9a9a9a" stroke-width="1"/></svg>
<svg style="position:absolute;left:507px;top:627px" width="9" height="11" viewBox="0 0 9 11"><path d="M0.5 0.5H8.5V6.5L4.5 10.5L0.5 6.5Z" fill="#2b2b2b" stroke="#5f6164"/><path d="M2.5 4.5H6.5" stroke="#9a9a9a" stroke-width="1"/></svg>
<svg style="position:absolute;left:507px;top:647px" width="9" height="11" viewBox="0 0 9 11"><path d="M0.5 0.5H8.5V6.5L4.5 10.5L0.5 6.5Z" fill="#2b2b2b" stroke="#5f6164"/><path d="M2.5 4.5H6.5" stroke="#9a9a9a" stroke-width="1"/></svg>
<svg style="position:absolute;left:507px;top:687px" width="9" height="11" viewBox="0 0 9 11"><path d="M0.5 0.5H8.5V6.5L4.5 10.5L0.5 6.5Z" fill="#2b2b2b" stroke="#5f6164"/><path d="M2.5 4.5H6.5" stroke="#9a9a9a" stroke-width="1"/></svg>
<svg style="position:absolute;left:507px;top:726px" width="9" height="11" viewBox="0 0 9 11"><path d="M0.5 10.5H8.5V4.5L4.5 0.5L0.5 4.5Z" fill="#2b2b2b" stroke="#5f6164"/><path d="M2.5 5.5H6.5" stroke="#9a9a9a" stroke-width="1"/></svg>
<svg style="position:absolute;left:507px;top:746px" width="9" height="11" viewBox="0 0 9 11"><path d="M0.5 10.5H8.5V4.5L4.5 0.5L0.5 4.5Z" fill="#2b2b2b" stroke="#5f6164"/><path d="M2.5 5.5H6.5" stroke="#9a9a9a" stroke-width="1"/></svg>
<svg style="position:absolute;left:507px;top:786px" width="9" height="11" viewBox="0 0 9 11"><path d="M0.5 10.5H8.5V4.5L4.5 0.5L0.5 4.5Z" fill="#2b2b2b" stroke="#5f6164"/><path d="M2.5 5.5H6.5" stroke="#9a9a9a" stroke-width="1"/></svg>
<svg style="position:absolute;left:507px;top:827px" width="9" height="11" viewBox="0 0 9 11"><path d="M0.5 0.5H8.5V6.5L4.5 10.5L0.5 6.5Z" fill="#2b2b2b" stroke="#5f6164"/><path d="M2.5 4.5H6.5" stroke="#9a9a9a" stroke-width="1"/></svg>
<svg style="position:absolute;left:507px;top:847px" width="9" height="11" viewBox="0 0 9 11"><path d="M0.5 0.5H8.5V6.5L4.5 10.5L0.5 6.5Z" fill="#2b2b2b" stroke="#5f6164"/><path d="M2.5 4.5H6.5" stroke="#9a9a9a" stroke-width="1"/></svg>
<svg style="position:absolute;left:507px;top:887px" width="9" height="11" viewBox="0 0 9 11"><path d="M0.5 0.5H8.5V6.5L4.5 10.5L0.5 6.5Z" fill="#2b2b2b" stroke="#5f6164"/><path d="M2.5 4.5H6.5" stroke="#9a9a9a" stroke-width="1"/></svg>
<svg style="position:absolute;left:507px;top:926px" width="9" height="11" viewBox="0 0 9 11"><path d="M0.5 10.5H8.5V4.5L4.5 0.5L0.5 4.5Z" fill="#2b2b2b" stroke="#5f6164"/><path d="M2.5 5.5H6.5" stroke="#9a9a9a" stroke-width="1"/></svg>
<svg style="position:absolute;left:507px;top:946px" width="9" height="11" viewBox="0 0 9 11"><path d="M0.5 10.5H8.5V4.5L4.5 0.5L0.5 4.5Z" fill="#2b2b2b" stroke="#5f6164"/><path d="M2.5 5.5H6.5" stroke="#9a9a9a" stroke-width="1"/></svg>
<svg style="position:absolute;left:486px;top:206px" width="8" height="11" viewBox="0 0 8 11"><path d="M0 0L8 5.5L0 11Z" fill="#499c54"/></svg>
<svg style="position:absolute;left:486px;top:406px" width="8" height="11" viewBox="0 0 8 11"><path d="M0 0L8 5.5L0 11Z" fill="#499c54"/></svg>
<svg style="position:absolute;left:486px;top:626px" width="8" height="11" viewBox="0 0 8 11"><path d="M0 0L8 5.5L0 11Z" fill="#499c54"/></svg>
<svg style="position:absolute;left:486px;top:826px" width="8" height="11" viewBox="0 0 8 11"><path d="M0 0L8 5.5L0 11Z" fill="#499c54"/></svg>
<div class="rb" style="left:508px;top:180px;width:135px;height:43px"></div>
<div class="rb" style="left:516px;top:379px;width:120px;height:47px"></div>
<div class="rb" style="left:502px;top:595px;width:140px;height:48px"></div>
<div class="rb" style="left:508px;top:800px;width:130px;height:43px"></div>
<svg style="position:absolute;left:539px;top:84px" width="117" height="12" viewBox="0 0 117 12"><path d="M0 1.5 L12 1.5 M4.5 1.5 L4.5 12 M5.5 4.5 L8.5 7.5 M13 1.5 L25 1.5 M19.5 1.5 L19 4 M14.5 4.5 L23.5 4.5 L23.5 11.5 L14.5 11.5 L14.5 4.5 M17.5 4.5 L17.5 11.5 M20.5 4.5 L20.5 11.5 M17.5 7 L20.5 7 M17.5 9 L20.5 9 M28.5 0.5 L35.5 0.5 L35.5 4.5 L28.5 4.5 L28.5 0.5 M28.5 2.5 L35.5 2.5 M26 6.5 L38 6.5 M32.5 6.5 L32.5 10.5 M32.5 8.5 L36 8.5 M29.5 7.5 L27 11.5 M29 10 L31 11.5 L38 11.5 M39 1.5 L45.5 1.5 M39.5 3.5 L44.5 3.5 L44.5 11.5 L39.5 11.5 L39.5 3.5 M41.5 1.5 L41.5 6 M42.5 1.5 L42.5 6 M39.5 8.5 L44.5 8.5 M46 2.5 L49.5 2.5 L49.5 6.5 L46.5 6.5 L46.5 10.5 L50.5 10.5 L50.5 9 M53.5 0.5 L62.5 0.5 L62.5 3.5 L53.5 3.5 L53.5 0.5 M56.5 0.5 L56.5 3.5 M59.5 0.5 L59.5 3.5 M52 5.5 L64 5.5 M58.5 3.5 L58.5 5.5 M55.5 6.5 L60.5 6.5 L60.5 10.5 L55.5 10.5 L55.5 6.5 M55.5 8.5 L60.5 8.5 M53.5 5.5 L53.5 11.5 L63 11.5 M70.5 0 L71 1.5 M65 2.5 L77 2.5 M68 3 L76.5 12 M74 3 L65.5 12 M81 0 L78.5 5 M80 3 L80 12 M84 0.5 L83 4 M83 3.5 L89.5 3.5 M82 7.5 L90 7.5 M86.5 0 L86.5 12 M91.5 1 L93 2.5 M91 5.5 L93.5 5.5 L93.5 9.5 L91.5 11 M93.5 9.5 L95.5 11.5 L103 11.5 M96 0.5 L95.5 3 M95.5 2.5 L101 2.5 M95 5.5 L102.5 5.5 M98.5 0 L98.5 5.5 M97.5 5.5 L95.5 9.5 M100 5.5 L100 9.5 L102 9.5 M104 3.5 L108.5 3.5 M106.5 0 L106.5 11 L105.5 10.5 M104 8.5 L108.5 6.5 M109 1.5 L114.5 1.5 L110 5 M110.5 2.5 L115.5 5.5 M109 7.5 L116 7.5 M112.5 5.5 L112.5 12 M109 9.5 L116 9.5" fill="none" stroke="#8a8a8a" stroke-width="1"/></svg>
<svg style="position:absolute;left:539px;top:184px" width="52" height="12" viewBox="0 0 52 12"><path d="M0 3.5 L4.5 3.5 M2.5 0 L2.5 11 L1.5 10.5 M0 8.5 L4.5 6.5 M5 1.5 L12 1.5 M9.5 1.5 L9.5 11.5 L8 10.5 M18.5 0 L19 1.5 M14 2.5 L24 2.5 M16.5 3.5 L17.5 5 M21.5 3.5 L20.5 5 M14.5 5.5 L25 5.5 M15.5 5.5 L15.5 9 L13.5 12 M29.5 0.5 L34.5 0.5 L34.5 4.5 L29.5 4.5 L29.5 0.5 M26.5 6.5 L31.5 6.5 L31.5 11.5 L26.5 11.5 L26.5 6.5 M32.5 6.5 L37.5 6.5 L37.5 11.5 L32.5 11.5 L32.5 6.5 M42.5 0 L40 3.5 M41.5 2.5 L49.5 2.5 L49.5 9.5 L48 9 M42.5 4.5 L46.5 4.5 L46.5 7.5 L42.5 7.5 L42.5 11.5 L50.5 11.5 L50.5 9.5" fill="none" stroke="#8a8a8a" stroke-width="1"/></svg>
<svg style="position:absolute;left:539px;top:384px" width="78" height="12" viewBox="0 0 78 12"><path d="M0 3.5 L4.5 3.5 M2.5 0 L2.5 11 L1.5 10.5 M0 8.5 L4.5 6.5 M5 1.5 L12 1.5 M9.5 1.5 L9.5 11.5 L8 10.5 M14 1.5 L24 1.5 M13 5.5 L25 5.5 M17.5 1.5 L17.5 7.5 L14.5 12 M21.5 1.5 L21.5 12 M28 0.5 L29 2.5 M26.5 3.5 L37.5 3.5 M32.5 0 L31.5 5 L27 12 M35 0.5 L36.5 2 M31 6.5 L36 6.5 L31.5 11.5 M32.5 8.5 L38 12 M39 1.5 L43.5 1.5 M39.5 6 L43.5 6 M41.5 1.5 L41.5 10 M39 11 L44 9 M44.5 1.5 L51 1.5 M48 1.5 L44.5 7.5 M47.5 4.5 L47.5 12 M48.5 6.5 L50.5 8.5 M52 5 L56 5 M54 1 L54 10.5 M52 11.5 L56.5 9.5 M59.5 0 L59.5 1.5 M56.5 1.5 L64 1.5 M58 2.5 L58.5 3.5 M62 2.5 L61.5 3.5 M56.5 4.5 L64 4.5 M57.5 5.5 L62.5 5.5 L62.5 8.5 L57.5 8.5 L57.5 5.5 M57.5 7 L62.5 7 M59 8.5 L57 12 M61 8.5 L61 11.5 L64 11.5 M68.5 0 L66 3.5 M67.5 2.5 L75.5 2.5 L75.5 9.5 L74 9 M68.5 4.5 L72.5 4.5 L72.5 7.5 L68.5 7.5 L68.5 11.5 L76.5 11.5 L76.5 9.5" fill="none" stroke="#8a8a8a" stroke-width="1"/></svg>
<svg style="position:absolute;left:539px;top:604px" width="52" height="12" viewBox="0 0 52 12"><path d="M0 3.5 L4.5 3.5 M2.5 0 L2.5 11 L1.5 10.5 M0 8.5 L4.5 6.5 M5 1.5 L12 1.5 M9.5 1.5 L9.5 11.5 L8 10.5 M18.5 0 L19 1.5 M14 2.5 L24 2.5 M16.5 3.5 L17.5 5 M21.5 3.5 L20.5 5 M14.5 5.5 L25 5.5 M15.5 5.5 L15.5 9 L13.5 12 M29.5 0.5 L34.5 0.5 L34.5 4.5 L29.5 4.5 L29.5 0.5 M26.5 6.5 L31.5 6.5 L31.5 11.5 L26.5 11.5 L26.5 6.5 M32.5 6.5 L37.5 6.5 L37.5 11.5 L32.5 11.5 L32.5 6.5 M42.5 0 L40 3.5 M41.5 2.5 L49.5 2.5 L49.5 9.5 L48 9 M42.5 4.5 L46.5 4.5 L46.5 7.5 L42.5 7.5 L42.5 11.5 L50.5 11.5 L50.5 9.5" fill="none" stroke="#8a8a8a" stroke-width="1"/></svg>
<svg style="position:absolute;left:539px;top:804px" width="78" height="12" viewBox="0 0 78 12"><path d="M0 3.5 L4.5 3.5 M2.5 0 L2.5 11 L1.5 10.5 M0 8.5 L4.5 6.5 M5 1.5 L12 1.5 M9.5 1.5 L9.5 11.5 L8 10.5 M14 1.5 L24 1.5 M13 5.5 L25 5.5 M17.5 1.5 L17.5 7.5 L14.5 12 M21.5 1.5 L21.5 12 M28 0.5 L29 2.5 M26.5 3.5 L37.5 3.5 M32.5 0 L31.5 5 L27 12 M35 0.5 L36.5 2 M31 6.5 L36 6.5 L31.5 11.5 M32.5 8.5 L38 12 M39 1.5 L43.5 1.5 M39.5 6 L43.5 6 M41.5 1.5 L41.5 10 M39 11 L44 9 M44.5 1.5 L51 1.5 M48 1.5 L44.5 7.5 M47.5 4.5 L47.5 12 M48.5 6.5 L50.5 8.5 M52 5 L56 5 M54 1 L54 10.5 M52 11.5 L56.5 9.5 M59.5 0 L59.5 1.5 M56.5 1.5 L64 1.5 M58 2.5 L58.5 3.5 M62 2.5 L61.5 3.5 M56.5 4.5 L64 4.5 M57.5 5.5 L62.5 5.5 L62.5 8.5 L57.5 8.5 L57.5 5.5 M57.5 7 L62.5 7 M59 8.5 L57 12 M61 8.5 L61 11.5 L64 11.5 M68.5 0 L66 3.5 M67.5 2.5 L75.5 2.5 L75.5 9.5 L74 9 M68.5 4.5 L72.5 4.5 L72.5 7.5 L68.5 7.5 L68.5 11.5 L76.5 11.5 L76.5 9.5" fill="none" stroke="#8a8a8a" stroke-width="1"/></svg>
<div class="a" style="left:1357px;top:60px;width:1px;height:874px;background:#474747"></div>
<div class="a" style="left:1358px;top:60px;width:15px;height:874px;background:#2b2b2b"></div>
<div class="a" style="left:1361px;top:62px;width:10px;height:10px;background:#d8a51e"></div>
<div class="a" style="left:1364px;top:687px;width:8px;height:196px;background:#505355"></div>
<div class="a" style="left:1359px;top:135px;width:14px;height:2px;background:#dcb85a"></div>
<div class="a" style="left:1359px;top:844px;width:14px;height:2px;background:#dcb85a"></div>
<div class="a" style="left:1359px;top:889px;width:14px;height:2px;background:#dcb85a"></div>
<div class="a" style="left:518px;top:925px;width:814px;height:8px;background:#505355"></div>
<div class="a" style="left:448px;top:934px;width:924px;height:13px;background:#323334;border-top:1px solid #393a3b"></div>
<div class="t" style="left:1380px;top:38px">Gradle</div>
<svg style="position:absolute;left:1382px;top:68px" width="14" height="13" viewBox="0 0 14 13"><path d="M11.8 4.2A5 5 0 0 0 2.3 5M2.2 8.8A5 5 0 0 0 11.7 8" fill="none" stroke="#afb1b3" stroke-width="1.7"/><path d="M13.2 0.8V5.8H8.2Z M0.8 12.2V7.2H5.8Z" fill="#afb1b3"/></svg>
<svg style="position:absolute;left:1410px;top:69px" width="10" height="10" viewBox="0 0 10 10"><path d="M5 0V10M0 5H10" stroke="#afb1b3" stroke-width="1.7"/></svg>
<svg style="position:absolute;left:1436px;top:73px" width="10" height="2" viewBox="0 0 10 2"><rect width="10" height="1.6" fill="#5d6063"/></svg>
<div class="a" style="left:1457px;top:64px;width:1px;height:20px;background:#4a4d50"></div>
<svg style="position:absolute;left:1466px;top:67px" width="16" height="14" viewBox="0 0 16 14"><path d="M0.8 12.4C0.4 9 1.5 5.2 4.2 3.6L10.6 3.4C12.4 3.8 13.6 5.6 13.6 7.6L12.8 10.2L11.6 12.4Z" fill="#afb1b3"/><path d="M11.6 4.4C12.1 2.3 13 1.2 14 1.2C15 1.3 15.3 2.6 15 4.4C14.7 6.5 14.1 8 13 9.5" fill="none" stroke="#afb1b3" stroke-width="1.6"/><g fill="#3c3f41"><rect x="3.5" y="10.9" width="1.3" height="2"/><rect x="7.3" y="10.9" width="1.3" height="2"/></g><path d="M4.3 8.2Q5.8 7.2 7.6 7.6" stroke="#3c3f41" stroke-width="0.8" fill="none" opacity="0.5"/></svg>
<div class="a" style="left:1490px;top:64px;width:1px;height:20px;background:#4a4d50"></div>
<svg style="position:absolute;left:1501px;top:67px" width="12" height="14" viewBox="0 0 12 14"><rect x="0" y="0" width="12" height="1.8" fill="#afb1b3"/><rect x="0" y="12.2" width="12" height="1.8" fill="#afb1b3"/><path d="M3 6H9L6 3.3Z M3 8H9L6 10.7Z" fill="#afb1b3"/></svg>
<svg style="position:absolute;left:1527px;top:67px" width="12" height="14" viewBox="0 0 12 14"><rect x="0" y="6.1" width="12" height="1.8" fill="#afb1b3"/><path d="M3 1H9L6 4Z M3 13H9L6 10Z" fill="#afb1b3"/></svg>
<svg style="position:absolute;left:1552px;top:68px" width="16" height="14" viewBox="0 0 16 14"><path d="M0 0H5.5L7 1.8H12V11H0Z" fill="#9ca6ad"/><rect x="6" y="5" width="10" height="9" fill="#3c3f41"/><g fill="#40b6e0"><rect x="7" y="6" width="3.6" height="3.3"/><rect x="11.4" y="6" width="3.6" height="3.3"/><rect x="7" y="10" width="3.6" height="3.3"/><rect x="11.4" y="10" width="3.6" height="3.3"/></g></svg>
<svg style="position:absolute;left:1578px;top:67px" width="15" height="14" viewBox="0 0 15 14"><rect x="0" y="0" width="15" height="1.8" fill="#afb1b3"/><rect x="0" y="12" width="15" height="2" fill="#afb1b3"/><path d="M4 4V11.5M11 4V11.5" stroke="#40b6e0" stroke-width="1.3"/><path d="M2.2 5L4 2.8L5.8 5Z M9.2 5L11 2.8L12.8 5Z" fill="#40b6e0"/></svg>
<div class="a" style="left:1601px;top:64px;width:1px;height:20px;background:#4a4d50"></div>
<svg style="position:absolute;left:1611px;top:67px" width="15" height="14" viewBox="0 0 15 14"><rect x="0" y="5.2" width="15" height="3.6" fill="#afb1b3"/><path d="M4.4 14.5L7.2 -0.5M7.9 14.5L10.7 -0.5" stroke="#3c3f41" stroke-width="2.6"/><path d="M4.6 14L7.1 0M8.1 14L10.6 0" stroke="#afb1b3" stroke-width="1.2"/></svg>
<div class="a" style="left:1634px;top:64px;width:1px;height:20px;background:#4a4d50"></div>
<svg style="position:absolute;left:1644px;top:67px" width="15" height="14" viewBox="0 0 15 14"><path d="M1.5 12.5L8 6" stroke="#afb1b3" stroke-width="2.8" stroke-linecap="round"/><path d="M7 7A4.2 4.2 0 0 1 12.6 1.2L10.2 3.6L10.8 5.5L12.6 6.1L14.9 3.8A4.2 4.2 0 0 1 9 8.5Z" fill="#afb1b3"/></svg>
<div class="a" style="left:1374px;top:330px;width:455px;height:20px;background:#4b6eaf"></div>
<svg style="position:absolute;left:1377px;top:95px" width="10" height="8" viewBox="0 0 10 8"><path d="M0 0H10L5 8Z" fill="#a9abad"/></svg>
<svg style="position:absolute;left:1394px;top:93px" width="16" height="14" viewBox="0 0 16 14"><path d="M0.8 12.4C0.4 9 1.5 5.2 4.2 3.6L10.6 3.4C12.4 3.8 13.6 5.6 13.6 7.6L12.8 10.2L11.6 12.4Z" fill="#9ca6ad"/><path d="M11.6 4.4C12.1 2.3 13 1.2 14 1.2C15 1.3 15.3 2.6 15 4.4C14.7 6.5 14.1 8 13 9.5" fill="none" stroke="#9ca6ad" stroke-width="1.6"/><g fill="#3c3f41"><rect x="3.5" y="10.9" width="1.3" height="2"/><rect x="7.3" y="10.9" width="1.3" height="2"/></g><path d="M4.3 8.2Q5.8 7.2 7.6 7.6" stroke="#3c3f41" stroke-width="0.8" fill="none" opacity="0.5"/></svg>
<div class="t" style="left:1413px;top:90px">data-center</div>
<svg style="position:absolute;left:1395px;top:115px" width="8" height="9" viewBox="0 0 8 9"><path d="M0 0L8 4.5L0 9Z" fill="#a9abad"/></svg>
<svg style="position:absolute;left:1413px;top:114px" width="17" height="17" viewBox="0 0 17 17"><path d="M0 0H6.5L8 2H14V11H0Z" fill="#9ca6ad"/><circle cx="11" cy="10.3" r="5.2" fill="#3c3f41"/><circle cx="11" cy="10.3" r="3.3" fill="#5ab4dc"/><rect x="9.8" y="5.800000000000001" width="2.4" height="9" rx="0.6" fill="#5ab4dc" transform="rotate(0 11 10.3)"/><rect x="9.8" y="5.800000000000001" width="2.4" height="9" rx="0.6" fill="#5ab4dc" transform="rotate(60 11 10.3)"/><rect x="9.8" y="5.800000000000001" width="2.4" height="9" rx="0.6" fill="#5ab4dc" transform="rotate(120 11 10.3)"/><circle cx="11" cy="10.3" r="1.3" fill="#1d3d52"/></svg>
<div class="t" style="left:1431px;top:110px">Tasks</div>
<svg style="position:absolute;left:1395px;top:135px" width="8" height="9" viewBox="0 0 8 9"><path d="M0 0L8 4.5L0 9Z" fill="#a9abad"/></svg>
<svg style="position:absolute;left:1413px;top:134px" width="17" height="17" viewBox="0 0 17 17"><path d="M0 0H6.5L8 2H14V11H0Z" fill="#9ca6ad"/><circle cx="11" cy="10.3" r="5.2" fill="#3c3f41"/><circle cx="11" cy="10.3" r="3.3" fill="#5ab4dc"/><rect x="9.8" y="5.800000000000001" width="2.4" height="9" rx="0.6" fill="#5ab4dc" transform="rotate(0 11 10.3)"/><rect x="9.8" y="5.800000000000001" width="2.4" height="9" rx="0.6" fill="#5ab4dc" transform="rotate(60 11 10.3)"/><rect x="9.8" y="5.800000000000001" width="2.4" height="9" rx="0.6" fill="#5ab4dc" transform="rotate(120 11 10.3)"/><circle cx="11" cy="10.3" r="1.3" fill="#1d3d52"/></svg>
<div class="t" style="left:1431px;top:130px">Run Configurations</div>
<svg style="position:absolute;left:1395px;top:155px" width="8" height="9" viewBox="0 0 8 9"><path d="M0 0L8 4.5L0 9Z" fill="#a9abad"/></svg>
<svg style="position:absolute;left:1412px;top:153px" width="16" height="14" viewBox="0 0 16 14"><path d="M0.8 12.4C0.4 9 1.5 5.2 4.2 3.6L10.6 3.4C12.4 3.8 13.6 5.6 13.6 7.6L12.8 10.2L11.6 12.4Z" fill="#9ca6ad"/><path d="M11.6 4.4C12.1 2.3 13 1.2 14 1.2C15 1.3 15.3 2.6 15 4.4C14.7 6.5 14.1 8 13 9.5" fill="none" stroke="#9ca6ad" stroke-width="1.6"/><g fill="#3c3f41"><rect x="3.5" y="10.9" width="1.3" height="2"/><rect x="7.3" y="10.9" width="1.3" height="2"/></g><path d="M4.3 8.2Q5.8 7.2 7.6 7.6" stroke="#3c3f41" stroke-width="0.8" fill="none" opacity="0.5"/></svg>
<div class="t" style="left:1431px;top:150px">data-core</div>
<svg style="position:absolute;left:1395px;top:175px" width="8" height="9" viewBox="0 0 8 9"><path d="M0 0L8 4.5L0 9Z" fill="#a9abad"/></svg>
<svg style="position:absolute;left:1412px;top:173px" width="16" height="14" viewBox="0 0 16 14"><path d="M0.8 12.4C0.4 9 1.5 5.2 4.2 3.6L10.6 3.4C12.4 3.8 13.6 5.6 13.6 7.6L12.8 10.2L11.6 12.4Z" fill="#9ca6ad"/><path d="M11.6 4.4C12.1 2.3 13 1.2 14 1.2C15 1.3 15.3 2.6 15 4.4C14.7 6.5 14.1 8 13 9.5" fill="none" stroke="#9ca6ad" stroke-width="1.6"/><g fill="#3c3f41"><rect x="3.5" y="10.9" width="1.3" height="2"/><rect x="7.3" y="10.9" width="1.3" height="2"/></g><path d="M4.3 8.2Q5.8 7.2 7.6 7.6" stroke="#3c3f41" stroke-width="0.8" fill="none" opacity="0.5"/></svg>
<div class="t" style="left:1431px;top:170px">data-platform-3</div>
<svg style="position:absolute;left:1395px;top:195px" width="8" height="9" viewBox="0 0 8 9"><path d="M0 0L8 4.5L0 9Z" fill="#a9abad"/></svg>
<svg style="position:absolute;left:1412px;top:193px" width="16" height="14" viewBox="0 0 16 14"><path d="M0.8 12.4C0.4 9 1.5 5.2 4.2 3.6L10.6 3.4C12.4 3.8 13.6 5.6 13.6 7.6L12.8 10.2L11.6 12.4Z" fill="#9ca6ad"/><path d="M11.6 4.4C12.1 2.3 13 1.2 14 1.2C15 1.3 15.3 2.6 15 4.4C14.7 6.5 14.1 8 13 9.5" fill="none" stroke="#9ca6ad" stroke-width="1.6"/><g fill="#3c3f41"><rect x="3.5" y="10.9" width="1.3" height="2"/><rect x="7.3" y="10.9" width="1.3" height="2"/></g><path d="M4.3 8.2Q5.8 7.2 7.6 7.6" stroke="#3c3f41" stroke-width="0.8" fill="none" opacity="0.5"/></svg>
<div class="t" style="left:1431px;top:190px">datacenter</div>
<svg style="position:absolute;left:1395px;top:215px" width="8" height="9" viewBox="0 0 8 9"><path d="M0 0L8 4.5L0 9Z" fill="#a9abad"/></svg>
<svg style="position:absolute;left:1412px;top:213px" width="16" height="14" viewBox="0 0 16 14"><path d="M0.8 12.4C0.4 9 1.5 5.2 4.2 3.6L10.6 3.4C12.4 3.8 13.6 5.6 13.6 7.6L12.8 10.2L11.6 12.4Z" fill="#9ca6ad"/><path d="M11.6 4.4C12.1 2.3 13 1.2 14 1.2C15 1.3 15.3 2.6 15 4.4C14.7 6.5 14.1 8 13 9.5" fill="none" stroke="#9ca6ad" stroke-width="1.6"/><g fill="#3c3f41"><rect x="3.5" y="10.9" width="1.3" height="2"/><rect x="7.3" y="10.9" width="1.3" height="2"/></g><path d="M4.3 8.2Q5.8 7.2 7.6 7.6" stroke="#3c3f41" stroke-width="0.8" fill="none" opacity="0.5"/></svg>
<div class="t" style="left:1431px;top:210px">dataplatform-sync</div>
<svg style="position:absolute;left:1395px;top:235px" width="8" height="9" viewBox="0 0 8 9"><path d="M0 0L8 4.5L0 9Z" fill="#a9abad"/></svg>
<svg style="position:absolute;left:1412px;top:233px" width="16" height="14" viewBox="0 0 16 14"><path d="M0.8 12.4C0.4 9 1.5 5.2 4.2 3.6L10.6 3.4C12.4 3.8 13.6 5.6 13.6 7.6L12.8 10.2L11.6 12.4Z" fill="#9ca6ad"/><path d="M11.6 4.4C12.1 2.3 13 1.2 14 1.2C15 1.3 15.3 2.6 15 4.4C14.7 6.5 14.1 8 13 9.5" fill="none" stroke="#9ca6ad" stroke-width="1.6"/><g fill="#3c3f41"><rect x="3.5" y="10.9" width="1.3" height="2"/><rect x="7.3" y="10.9" width="1.3" height="2"/></g><path d="M4.3 8.2Q5.8 7.2 7.6 7.6" stroke="#3c3f41" stroke-width="0.8" fill="none" opacity="0.5"/></svg>
<div class="t" style="left:1431px;top:230px">equip-component</div>
<svg style="position:absolute;left:1395px;top:255px" width="8" height="9" viewBox="0 0 8 9"><path d="M0 0L8 4.5L0 9Z" fill="#a9abad"/></svg>
<svg style="position:absolute;left:1412px;top:253px" width="16" height="14" viewBox="0 0 16 14"><path d="M0.8 12.4C0.4 9 1.5 5.2 4.2 3.6L10.6 3.4C12.4 3.8 13.6 5.6 13.6 7.6L12.8 10.2L11.6 12.4Z" fill="#9ca6ad"/><path d="M11.6 4.4C12.1 2.3 13 1.2 14 1.2C15 1.3 15.3 2.6 15 4.4C14.7 6.5 14.1 8 13 9.5" fill="none" stroke="#9ca6ad" stroke-width="1.6"/><g fill="#3c3f41"><rect x="3.5" y="10.9" width="1.3" height="2"/><rect x="7.3" y="10.9" width="1.3" height="2"/></g><path d="M4.3 8.2Q5.8 7.2 7.6 7.6" stroke="#3c3f41" stroke-width="0.8" fill="none" opacity="0.5"/></svg>
<div class="t" style="left:1431px;top:250px">ibms</div>
<svg style="position:absolute;left:1395px;top:275px" width="8" height="9" viewBox="0 0 8 9"><path d="M0 0L8 4.5L0 9Z" fill="#a9abad"/></svg>
<svg style="position:absolute;left:1412px;top:273px" width="16" height="14" viewBox="0 0 16 14"><path d="M0.8 12.4C0.4 9 1.5 5.2 4.2 3.6L10.6 3.4C12.4 3.8 13.6 5.6 13.6 7.6L12.8 10.2L11.6 12.4Z" fill="#9ca6ad"/><path d="M11.6 4.4C12.1 2.3 13 1.2 14 1.2C15 1.3 15.3 2.6 15 4.4C14.7 6.5 14.1 8 13 9.5" fill="none" stroke="#9ca6ad" stroke-width="1.6"/><g fill="#3c3f41"><rect x="3.5" y="10.9" width="1.3" height="2"/><rect x="7.3" y="10.9" width="1.3" height="2"/></g><path d="M4.3 8.2Q5.8 7.2 7.6 7.6" stroke="#3c3f41" stroke-width="0.8" fill="none" opacity="0.5"/></svg>
<div class="t" style="left:1431px;top:270px">message-center</div>
<svg style="position:absolute;left:1395px;top:295px" width="8" height="9" viewBox="0 0 8 9"><path d="M0 0L8 4.5L0 9Z" fill="#a9abad"/></svg>
<svg style="position:absolute;left:1412px;top:293px" width="16" height="14" viewBox="0 0 16 14"><path d="M0.8 12.4C0.4 9 1.5 5.2 4.2 3.6L10.6 3.4C12.4 3.8 13.6 5.6 13.6 7.6L12.8 10.2L11.6 12.4Z" fill="#9ca6ad"/><path d="M11.6 4.4C12.1 2.3 13 1.2 14 1.2C15 1.3 15.3 2.6 15 4.4C14.7 6.5 14.1 8 13 9.5" fill="none" stroke="#9ca6ad" stroke-width="1.6"/><g fill="#3c3f41"><rect x="3.5" y="10.9" width="1.3" height="2"/><rect x="7.3" y="10.9" width="1.3" height="2"/></g><path d="M4.3 8.2Q5.8 7.2 7.6 7.6" stroke="#3c3f41" stroke-width="0.8" fill="none" opacity="0.5"/></svg>
<div class="t" style="left:1431px;top:290px">pointconfig</div>
<svg style="position:absolute;left:1395px;top:315px" width="8" height="9" viewBox="0 0 8 9"><path d="M0 0L8 4.5L0 9Z" fill="#a9abad"/></svg>
<svg style="position:absolute;left:1412px;top:313px" width="16" height="14" viewBox="0 0 16 14"><path d="M0.8 12.4C0.4 9 1.5 5.2 4.2 3.6L10.6 3.4C12.4 3.8 13.6 5.6 13.6 7.6L12.8 10.2L11.6 12.4Z" fill="#9ca6ad"/><path d="M11.6 4.4C12.1 2.3 13 1.2 14 1.2C15 1.3 15.3 2.6 15 4.4C14.7 6.5 14.1 8 13 9.5" fill="none" stroke="#9ca6ad" stroke-width="1.6"/><g fill="#3c3f41"><rect x="3.5" y="10.9" width="1.3" height="2"/><rect x="7.3" y="10.9" width="1.3" height="2"/></g><path d="M4.3 8.2Q5.8 7.2 7.6 7.6" stroke="#3c3f41" stroke-width="0.8" fill="none" opacity="0.5"/></svg>
<div class="t" style="left:1431px;top:310px">prod</div>
<svg style="position:absolute;left:1395px;top:335px" width="8" height="9" viewBox="0 0 8 9"><path d="M0 0L8 4.5L0 9Z" fill="#a9abad"/></svg>
<svg style="position:absolute;left:1412px;top:333px" width="16" height="14" viewBox="0 0 16 14"><path d="M0.8 12.4C0.4 9 1.5 5.2 4.2 3.6L10.6 3.4C12.4 3.8 13.6 5.6 13.6 7.6L12.8 10.2L11.6 12.4Z" fill="#9ca6ad"/><path d="M11.6 4.4C12.1 2.3 13 1.2 14 1.2C15 1.3 15.3 2.6 15 4.4C14.7 6.5 14.1 8 13 9.5" fill="none" stroke="#9ca6ad" stroke-width="1.6"/><g fill="#4b6eaf"><rect x="3.5" y="10.9" width="1.3" height="2"/><rect x="7.3" y="10.9" width="1.3" height="2"/></g><path d="M4.3 8.2Q5.8 7.2 7.6 7.6" stroke="#4b6eaf" stroke-width="0.8" fill="none" opacity="0.5"/></svg>
<div class="t" style="left:1431px;top:330px">revit-algorithm</div>
<svg style="position:absolute;left:1395px;top:355px" width="8" height="9" viewBox="0 0 8 9"><path d="M0 0L8 4.5L0 9Z" fill="#a9abad"/></svg>
<svg style="position:absolute;left:1412px;top:353px" width="16" height="14" viewBox="0 0 16 14"><path d="M0.8 12.4C0.4 9 1.5 5.2 4.2 3.6L10.6 3.4C12.4 3.8 13.6 5.6 13.6 7.6L12.8 10.2L11.6 12.4Z" fill="#9ca6ad"/><path d="M11.6 4.4C12.1 2.3 13 1.2 14 1.2C15 1.3 15.3 2.6 15 4.4C14.7 6.5 14.1 8 13 9.5" fill="none" stroke="#9ca6ad" stroke-width="1.6"/><g fill="#3c3f41"><rect x="3.5" y="10.9" width="1.3" height="2"/><rect x="7.3" y="10.9" width="1.3" height="2"/></g><path d="M4.3 8.2Q5.8 7.2 7.6 7.6" stroke="#3c3f41" stroke-width="0.8" fill="none" opacity="0.5"/></svg>
<div class="t" style="left:1431px;top:350px">scanbuilding</div>
<svg style="position:absolute;left:1395px;top:375px" width="10" height="8" viewBox="0 0 10 8"><path d="M0 0H10L5 8Z" fill="#a9abad"/></svg>
<svg style="position:absolute;left:1412px;top:373px" width="16" height="14" viewBox="0 0 16 14"><path d="M0.8 12.4C0.4 9 1.5 5.2 4.2 3.6L10.6 3.4C12.4 3.8 13.6 5.6 13.6 7.6L12.8 10.2L11.6 12.4Z" fill="#9ca6ad"/><path d="M11.6 4.4C12.1 2.3 13 1.2 14 1.2C15 1.3 15.3 2.6 15 4.4C14.7 6.5 14.1 8 13 9.5" fill="none" stroke="#9ca6ad" stroke-width="1.6"/><g fill="#3c3f41"><rect x="3.5" y="10.9" width="1.3" height="2"/><rect x="7.3" y="10.9" width="1.3" height="2"/></g><path d="M4.3 8.2Q5.8 7.2 7.6 7.6" stroke="#3c3f41" stroke-width="0.8" fill="none" opacity="0.5"/></svg>
<div class="t" style="left:1431px;top:370px">scheduler</div>
<svg style="position:absolute;left:1413px;top:395px" width="8" height="9" viewBox="0 0 8 9"><path d="M0 0L8 4.5L0 9Z" fill="#a9abad"/></svg>
<svg style="position:absolute;left:1431px;top:394px" width="17" height="17" viewBox="0 0 17 17"><path d="M0 0H6.5L8 2H14V11H0Z" fill="#9ca6ad"/><rect x="7" y="6" width="10" height="10" fill="#3c3f41"/><g fill="#40b6e0"><rect x="8" y="7" width="3.5" height="3.5"/><rect x="12.5" y="7" width="3.5" height="3.5"/><rect x="8" y="11.5" width="3.5" height="3.5"/><rect x="12.5" y="11.5" width="3.5" height="3.5"/></g></svg>
<div class="t" style="left:1449px;top:390px">Source Sets</div>
<svg style="position:absolute;left:1413px;top:415px" width="10" height="8" viewBox="0 0 10 8"><path d="M0 0H10L5 8Z" fill="#a9abad"/></svg>
<svg style="position:absolute;left:1431px;top:414px" width="17" height="17" viewBox="0 0 17 17"><path d="M0 0H6.5L8 2H14V11H0Z" fill="#9ca6ad"/><circle cx="11" cy="10.3" r="5.2" fill="#3c3f41"/><circle cx="11" cy="10.3" r="3.3" fill="#5ab4dc"/><rect x="9.8" y="5.800000000000001" width="2.4" height="9" rx="0.6" fill="#5ab4dc" transform="rotate(0 11 10.3)"/><rect x="9.8" y="5.800000000000001" width="2.4" height="9" rx="0.6" fill="#5ab4dc" transform="rotate(60 11 10.3)"/><rect x="9.8" y="5.800000000000001" width="2.4" height="9" rx="0.6" fill="#5ab4dc" transform="rotate(120 11 10.3)"/><circle cx="11" cy="10.3" r="1.3" fill="#1d3d52"/></svg>
<div class="t" style="left:1449px;top:410px">Tasks</div>
<svg style="position:absolute;left:1431px;top:435px" width="8" height="9" viewBox="0 0 8 9"><path d="M0 0L8 4.5L0 9Z" fill="#a9abad"/></svg>
<svg style="position:absolute;left:1449px;top:434px" width="17" height="17" viewBox="0 0 17 17"><path d="M0 0H6.5L8 2H14V11H0Z" fill="#9ca6ad"/><circle cx="11" cy="10.3" r="5.2" fill="#3c3f41"/><circle cx="11" cy="10.3" r="3.3" fill="#5ab4dc"/><rect x="9.8" y="5.800000000000001" width="2.4" height="9" rx="0.6" fill="#5ab4dc" transform="rotate(0 11 10.3)"/><rect x="9.8" y="5.800000000000001" width="2.4" height="9" rx="0.6" fill="#5ab4dc" transform="rotate(60 11 10.3)"/><rect x="9.8" y="5.800000000000001" width="2.4" height="9" rx="0.6" fill="#5ab4dc" transform="rotate(120 11 10.3)"/><circle cx="11" cy="10.3" r="1.3" fill="#1d3d52"/></svg>
<div class="t" style="left:1467px;top:430px">application</div>
<svg style="position:absolute;left:1431px;top:455px" width="8" height="9" viewBox="0 0 8 9"><path d="M0 0L8 4.5L0 9Z" fill="#a9abad"/></svg>
<svg style="position:absolute;left:1449px;top:454px" width="17" height="17" viewBox="0 0 17 17"><path d="M0 0H6.5L8 2H14V11H0Z" fill="#9ca6ad"/><circle cx="11" cy="10.3" r="5.2" fill="#3c3f41"/><circle cx="11" cy="10.3" r="3.3" fill="#5ab4dc"/><rect x="9.8" y="5.800000000000001" width="2.4" height="9" rx="0.6" fill="#5ab4dc" transform="rotate(0 11 10.3)"/><rect x="9.8" y="5.800000000000001" width="2.4" height="9" rx="0.6" fill="#5ab4dc" transform="rotate(60 11 10.3)"/><rect x="9.8" y="5.800000000000001" width="2.4" height="9" rx="0.6" fill="#5ab4dc" transform="rotate(120 11 10.3)"/><circle cx="11" cy="10.3" r="1.3" fill="#1d3d52"/></svg>
<div class="t" style="left:1467px;top:450px">build</div>
<svg style="position:absolute;left:1431px;top:475px" width="8" height="9" viewBox="0 0 8 9"><path d="M0 0L8 4.5L0 9Z" fill="#a9abad"/></svg>
<svg style="position:absolute;left:1449px;top:474px" width="17" height="17" viewBox="0 0 17 17"><path d="M0 0H6.5L8 2H14V11H0Z" fill="#9ca6ad"/><circle cx="11" cy="10.3" r="5.2" fill="#3c3f41"/><circle cx="11" cy="10.3" r="3.3" fill="#5ab4dc"/><rect x="9.8" y="5.800000000000001" width="2.4" height="9" rx="0.6" fill="#5ab4dc" transform="rotate(0 11 10.3)"/><rect x="9.8" y="5.800000000000001" width="2.4" height="9" rx="0.6" fill="#5ab4dc" transform="rotate(60 11 10.3)"/><rect x="9.8" y="5.800000000000001" width="2.4" height="9" rx="0.6" fill="#5ab4dc" transform="rotate(120 11 10.3)"/><circle cx="11" cy="10.3" r="1.3" fill="#1d3d52"/></svg>
<div class="t" style="left:1467px;top:470px">documentation</div>
<svg style="position:absolute;left:1431px;top:495px" width="8" height="9" viewBox="0 0 8 9"><path d="M0 0L8 4.5L0 9Z" fill="#a9abad"/></svg>
<svg style="position:absolute;left:1449px;top:494px" width="17" height="17" viewBox="0 0 17 17"><path d="M0 0H6.5L8 2H14V11H0Z" fill="#9ca6ad"/><circle cx="11" cy="10.3" r="5.2" fill="#3c3f41"/><circle cx="11" cy="10.3" r="3.3" fill="#5ab4dc"/><rect x="9.8" y="5.800000000000001" width="2.4" height="9" rx="0.6" fill="#5ab4dc" transform="rotate(0 11 10.3)"/><rect x="9.8" y="5.800000000000001" width="2.4" height="9" rx="0.6" fill="#5ab4dc" transform="rotate(60 11 10.3)"/><rect x="9.8" y="5.800000000000001" width="2.4" height="9" rx="0.6" fill="#5ab4dc" transform="rotate(120 11 10.3)"/><circle cx="11" cy="10.3" r="1.3" fill="#1d3d52"/></svg>
<div class="t" style="left:1467px;top:490px">help</div>
<svg style="position:absolute;left:1431px;top:515px" width="10" height="8" viewBox="0 0 10 8"><path d="M0 0H10L5 8Z" fill="#a9abad"/></svg>
<svg style="position:absolute;left:1449px;top:514px" width="17" height="17" viewBox="0 0 17 17"><path d="M0 0H6.5L8 2H14V11H0Z" fill="#9ca6ad"/><circle cx="11" cy="10.3" r="5.2" fill="#3c3f41"/><circle cx="11" cy="10.3" r="3.3" fill="#5ab4dc"/><rect x="9.8" y="5.800000000000001" width="2.4" height="9" rx="0.6" fill="#5ab4dc" transform="rotate(0 11 10.3)"/><rect x="9.8" y="5.800000000000001" width="2.4" height="9" rx="0.6" fill="#5ab4dc" transform="rotate(60 11 10.3)"/><rect x="9.8" y="5.800000000000001" width="2.4" height="9" rx="0.6" fill="#5ab4dc" transform="rotate(120 11 10.3)"/><circle cx="11" cy="10.3" r="1.3" fill="#1d3d52"/></svg>
<div class="t" style="left:1467px;top:510px">other</div>
<svg style="position:absolute;left:1467px;top:533px" width="14" height="14" viewBox="0 0 14 14"><circle cx="7" cy="7" r="4.9" fill="#9ca6ad"/><rect x="5.3" y="0" width="3.4" height="14" rx="1" fill="#9ca6ad" transform="rotate(0.0 7 7)"/><rect x="5.3" y="0" width="3.4" height="14" rx="1" fill="#9ca6ad" transform="rotate(60.0 7 7)"/><rect x="5.3" y="0" width="3.4" height="14" rx="1" fill="#9ca6ad" transform="rotate(120.0 7 7)"/><circle cx="7" cy="7" r="2.3" fill="#3c3f41"/></svg>
<div class="t" style="left:1485px;top:530px">buildDevJar</div>
<svg style="position:absolute;left:1467px;top:553px" width="14" height="14" viewBox="0 0 14 14"><circle cx="7" cy="7" r="4.9" fill="#9ca6ad"/><rect x="5.3" y="0" width="3.4" height="14" rx="1" fill="#9ca6ad" transform="rotate(0.0 7 7)"/><rect x="5.3" y="0" width="3.4" height="14" rx="1" fill="#9ca6ad" transform="rotate(60.0 7 7)"/><rect x="5.3" y="0" width="3.4" height="14" rx="1" fill="#9ca6ad" transform="rotate(120.0 7 7)"/><circle cx="7" cy="7" r="2.3" fill="#3c3f41"/></svg>
<div class="t" style="left:1485px;top:550px">buildDevWar</div>
<svg style="position:absolute;left:1467px;top:573px" width="14" height="14" viewBox="0 0 14 14"><circle cx="7" cy="7" r="4.9" fill="#9ca6ad"/><rect x="5.3" y="0" width="3.4" height="14" rx="1" fill="#9ca6ad" transform="rotate(0.0 7 7)"/><rect x="5.3" y="0" width="3.4" height="14" rx="1" fill="#9ca6ad" transform="rotate(60.0 7 7)"/><rect x="5.3" y="0" width="3.4" height="14" rx="1" fill="#9ca6ad" transform="rotate(120.0 7 7)"/><circle cx="7" cy="7" r="2.3" fill="#3c3f41"/></svg>
<div class="t" style="left:1485px;top:570px">buildProdJar</div>
<svg style="position:absolute;left:1467px;top:593px" width="14" height="14" viewBox="0 0 14 14"><circle cx="7" cy="7" r="4.9" fill="#9ca6ad"/><rect x="5.3" y="0" width="3.4" height="14" rx="1" fill="#9ca6ad" transform="rotate(0.0 7 7)"/><rect x="5.3" y="0" width="3.4" height="14" rx="1" fill="#9ca6ad" transform="rotate(60.0 7 7)"/><rect x="5.3" y="0" width="3.4" height="14" rx="1" fill="#9ca6ad" transform="rotate(120.0 7 7)"/><circle cx="7" cy="7" r="2.3" fill="#3c3f41"/></svg>
<div class="t" style="left:1485px;top:590px">buildProdWar</div>
<svg style="position:absolute;left:1467px;top:613px" width="14" height="14" viewBox="0 0 14 14"><circle cx="7" cy="7" r="4.9" fill="#9ca6ad"/><rect x="5.3" y="0" width="3.4" height="14" rx="1" fill="#9ca6ad" transform="rotate(0.0 7 7)"/><rect x="5.3" y="0" width="3.4" height="14" rx="1" fill="#9ca6ad" transform="rotate(60.0 7 7)"/><rect x="5.3" y="0" width="3.4" height="14" rx="1" fill="#9ca6ad" transform="rotate(120.0 7 7)"/><circle cx="7" cy="7" r="2.3" fill="#3c3f41"/></svg>
<div class="t" style="left:1485px;top:610px">compileJava</div>
<svg style="position:absolute;left:1467px;top:633px" width="14" height="14" viewBox="0 0 14 14"><circle cx="7" cy="7" r="4.9" fill="#9ca6ad"/><rect x="5.3" y="0" width="3.4" height="14" rx="1" fill="#9ca6ad" transform="rotate(0.0 7 7)"/><rect x="5.3" y="0" width="3.4" height="14" rx="1" fill="#9ca6ad" transform="rotate(60.0 7 7)"/><rect x="5.3" y="0" width="3.4" height="14" rx="1" fill="#9ca6ad" transform="rotate(120.0 7 7)"/><circle cx="7" cy="7" r="2.3" fill="#3c3f41"/></svg>
<div class="t" style="left:1485px;top:630px">compileKotlin</div>
<svg style="position:absolute;left:1467px;top:653px" width="14" height="14" viewBox="0 0 14 14"><circle cx="7" cy="7" r="4.9" fill="#9ca6ad"/><rect x="5.3" y="0" width="3.4" height="14" rx="1" fill="#9ca6ad" transform="rotate(0.0 7 7)"/><rect x="5.3" y="0" width="3.4" height="14" rx="1" fill="#9ca6ad" transform="rotate(60.0 7 7)"/><rect x="5.3" y="0" width="3.4" height="14" rx="1" fill="#9ca6ad" transform="rotate(120.0 7 7)"/><circle cx="7" cy="7" r="2.3" fill="#3c3f41"/></svg>
<div class="t" style="left:1485px;top:650px">compileTestJava</div>
<svg style="position:absolute;left:1467px;top:673px" width="14" height="14" viewBox="0 0 14 14"><circle cx="7" cy="7" r="4.9" fill="#9ca6ad"/><rect x="5.3" y="0" width="3.4" height="14" rx="1" fill="#9ca6ad" transform="rotate(0.0 7 7)"/><rect x="5.3" y="0" width="3.4" height="14" rx="1" fill="#9ca6ad" transform="rotate(60.0 7 7)"/><rect x="5.3" y="0" width="3.4" height="14" rx="1" fill="#9ca6ad" transform="rotate(120.0 7 7)"/><circle cx="7" cy="7" r="2.3" fill="#3c3f41"/></svg>
<div class="t" style="left:1485px;top:670px">compileTestKotlin</div>
<svg style="position:absolute;left:1467px;top:693px" width="14" height="14" viewBox="0 0 14 14"><circle cx="7" cy="7" r="4.9" fill="#9ca6ad"/><rect x="5.3" y="0" width="3.4" height="14" rx="1" fill="#9ca6ad" transform="rotate(0.0 7 7)"/><rect x="5.3" y="0" width="3.4" height="14" rx="1" fill="#9ca6ad" transform="rotate(60.0 7 7)"/><rect x="5.3" y="0" width="3.4" height="14" rx="1" fill="#9ca6ad" transform="rotate(120.0 7 7)"/><circle cx="7" cy="7" r="2.3" fill="#3c3f41"/></svg>
<div class="t" style="left:1485px;top:690px">inspectClassesForKotlinIC</div>
<svg style="position:absolute;left:1467px;top:713px" width="14" height="14" viewBox="0 0 14 14"><circle cx="7" cy="7" r="4.9" fill="#9ca6ad"/><rect x="5.3" y="0" width="3.4" height="14" rx="1" fill="#9ca6ad" transform="rotate(0.0 7 7)"/><rect x="5.3" y="0" width="3.4" height="14" rx="1" fill="#9ca6ad" transform="rotate(60.0 7 7)"/><rect x="5.3" y="0" width="3.4" height="14" rx="1" fill="#9ca6ad" transform="rotate(120.0 7 7)"/><circle cx="7" cy="7" r="2.3" fill="#3c3f41"/></svg>
<div class="t" style="left:1485px;top:710px">install</div>
<svg style="position:absolute;left:1467px;top:733px" width="14" height="14" viewBox="0 0 14 14"><circle cx="7" cy="7" r="4.9" fill="#9ca6ad"/><rect x="5.3" y="0" width="3.4" height="14" rx="1" fill="#9ca6ad" transform="rotate(0.0 7 7)"/><rect x="5.3" y="0" width="3.4" height="14" rx="1" fill="#9ca6ad" transform="rotate(60.0 7 7)"/><rect x="5.3" y="0" width="3.4" height="14" rx="1" fill="#9ca6ad" transform="rotate(120.0 7 7)"/><circle cx="7" cy="7" r="2.3" fill="#3c3f41"/></svg>
<div class="t" style="left:1485px;top:730px">kotlinSourcesJar</div>
<svg style="position:absolute;left:1467px;top:753px" width="14" height="14" viewBox="0 0 14 14"><circle cx="7" cy="7" r="4.9" fill="#9ca6ad"/><rect x="5.3" y="0" width="3.4" height="14" rx="1" fill="#9ca6ad" transform="rotate(0.0 7 7)"/><rect x="5.3" y="0" width="3.4" height="14" rx="1" fill="#9ca6ad" transform="rotate(60.0 7 7)"/><rect x="5.3" y="0" width="3.4" height="14" rx="1" fill="#9ca6ad" transform="rotate(120.0 7 7)"/><circle cx="7" cy="7" r="2.3" fill="#3c3f41"/></svg>
<div class="t" style="left:1485px;top:750px">mainClasses</div>
<svg style="position:absolute;left:1467px;top:773px" width="14" height="14" viewBox="0 0 14 14"><circle cx="7" cy="7" r="4.9" fill="#9ca6ad"/><rect x="5.3" y="0" width="3.4" height="14" rx="1" fill="#9ca6ad" transform="rotate(0.0 7 7)"/><rect x="5.3" y="0" width="3.4" height="14" rx="1" fill="#9ca6ad" transform="rotate(60.0 7 7)"/><rect x="5.3" y="0" width="3.4" height="14" rx="1" fill="#9ca6ad" transform="rotate(120.0 7 7)"/><circle cx="7" cy="7" r="2.3" fill="#3c3f41"/></svg>
<div class="t" style="left:1485px;top:770px">processResources</div>
<svg style="position:absolute;left:1467px;top:793px" width="14" height="14" viewBox="0 0 14 14"><circle cx="7" cy="7" r="4.9" fill="#9ca6ad"/><rect x="5.3" y="0" width="3.4" height="14" rx="1" fill="#9ca6ad" transform="rotate(0.0 7 7)"/><rect x="5.3" y="0" width="3.4" height="14" rx="1" fill="#9ca6ad" transform="rotate(60.0 7 7)"/><rect x="5.3" y="0" width="3.4" height="14" rx="1" fill="#9ca6ad" transform="rotate(120.0 7 7)"/><circle cx="7" cy="7" r="2.3" fill="#3c3f41"/></svg>
<div class="t" style="left:1485px;top:790px">processTestResources</div>
<svg style="position:absolute;left:1431px;top:815px" width="8" height="9" viewBox="0 0 8 9"><path d="M0 0L8 4.5L0 9Z" fill="#a9abad"/></svg>
<svg style="position:absolute;left:1449px;top:814px" width="17" height="17" viewBox="0 0 17 17"><path d="M0 0H6.5L8 2H14V11H0Z" fill="#9ca6ad"/><circle cx="11" cy="10.3" r="5.2" fill="#3c3f41"/><circle cx="11" cy="10.3" r="3.3" fill="#5ab4dc"/><rect x="9.8" y="5.800000000000001" width="2.4" height="9" rx="0.6" fill="#5ab4dc" transform="rotate(0 11 10.3)"/><rect x="9.8" y="5.800000000000001" width="2.4" height="9" rx="0.6" fill="#5ab4dc" transform="rotate(60 11 10.3)"/><rect x="9.8" y="5.800000000000001" width="2.4" height="9" rx="0.6" fill="#5ab4dc" transform="rotate(120 11 10.3)"/><circle cx="11" cy="10.3" r="1.3" fill="#1d3d52"/></svg>
<div class="t" style="left:1467px;top:810px">verification</div>
<svg style="position:absolute;left:1395px;top:835px" width="8" height="9" viewBox="0 0 8 9"><path d="M0 0L8 4.5L0 9Z" fill="#a9abad"/></svg>
<svg style="position:absolute;left:1412px;top:833px" width="16" height="14" viewBox="0 0 16 14"><path d="M0.8 12.4C0.4 9 1.5 5.2 4.2 3.6L10.6 3.4C12.4 3.8 13.6 5.6 13.6 7.6L12.8 10.2L11.6 12.4Z" fill="#9ca6ad"/><path d="M11.6 4.4C12.1 2.3 13 1.2 14 1.2C15 1.3 15.3 2.6 15 4.4C14.7 6.5 14.1 8 13 9.5" fill="none" stroke="#9ca6ad" stroke-width="1.6"/><g fill="#3c3f41"><rect x="3.5" y="10.9" width="1.3" height="2"/><rect x="7.3" y="10.9" width="1.3" height="2"/></g><path d="M4.3 8.2Q5.8 7.2 7.6 7.6" stroke="#3c3f41" stroke-width="0.8" fill="none" opacity="0.5"/></svg>
<div class="t" style="left:1431px;top:830px">topology</div>
<svg style="position:absolute;left:1395px;top:855px" width="8" height="9" viewBox="0 0 8 9"><path d="M0 0L8 4.5L0 9Z" fill="#a9abad"/></svg>
<svg style="position:absolute;left:1412px;top:853px" width="16" height="14" viewBox="0 0 16 14"><path d="M0.8 12.4C0.4 9 1.5 5.2 4.2 3.6L10.6 3.4C12.4 3.8 13.6 5.6 13.6 7.6L12.8 10.2L11.6 12.4Z" fill="#9ca6ad"/><path d="M11.6 4.4C12.1 2.3 13 1.2 14 1.2C15 1.3 15.3 2.6 15 4.4C14.7 6.5 14.1 8 13 9.5" fill="none" stroke="#9ca6ad" stroke-width="1.6"/><g fill="#3c3f41"><rect x="3.5" y="10.9" width="1.3" height="2"/><rect x="7.3" y="10.9" width="1.3" height="2"/></g><path d="M4.3 8.2Q5.8 7.2 7.6 7.6" stroke="#3c3f41" stroke-width="0.8" fill="none" opacity="0.5"/></svg>
<div class="t" style="left:1431px;top:850px">topology-wanda</div>
<svg style="position:absolute;left:1395px;top:875px" width="8" height="9" viewBox="0 0 8 9"><path d="M0 0L8 4.5L0 9Z" fill="#a9abad"/></svg>
<svg style="position:absolute;left:1412px;top:873px" width="16" height="14" viewBox="0 0 16 14"><path d="M0.8 12.4C0.4 9 1.5 5.2 4.2 3.6L10.6 3.4C12.4 3.8 13.6 5.6 13.6 7.6L12.8 10.2L11.6 12.4Z" fill="#9ca6ad"/><path d="M11.6 4.4C12.1 2.3 13 1.2 14 1.2C15 1.3 15.3 2.6 15 4.4C14.7 6.5 14.1 8 13 9.5" fill="none" stroke="#9ca6ad" stroke-width="1.6"/><g fill="#3c3f41"><rect x="3.5" y="10.9" width="1.3" height="2"/><rect x="7.3" y="10.9" width="1.3" height="2"/></g><path d="M4.3 8.2Q5.8 7.2 7.6 7.6" stroke="#3c3f41" stroke-width="0.8" fill="none" opacity="0.5"/></svg>
<div class="t" style="left:1431px;top:870px">venders</div>
<svg style="position:absolute;left:1395px;top:895px" width="8" height="9" viewBox="0 0 8 9"><path d="M0 0L8 4.5L0 9Z" fill="#a9abad"/></svg>
<svg style="position:absolute;left:1412px;top:893px" width="16" height="14" viewBox="0 0 16 14"><path d="M0.8 12.4C0.4 9 1.5 5.2 4.2 3.6L10.6 3.4C12.4 3.8 13.6 5.6 13.6 7.6L12.8 10.2L11.6 12.4Z" fill="#9ca6ad"/><path d="M11.6 4.4C12.1 2.3 13 1.2 14 1.2C15 1.3 15.3 2.6 15 4.4C14.7 6.5 14.1 8 13 9.5" fill="none" stroke="#9ca6ad" stroke-width="1.6"/><g fill="#3c3f41"><rect x="3.5" y="10.9" width="1.3" height="2"/><rect x="7.3" y="10.9" width="1.3" height="2"/></g><path d="M4.3 8.2Q5.8 7.2 7.6 7.6" stroke="#3c3f41" stroke-width="0.8" fill="none" opacity="0.5"/></svg>
<div class="t" style="left:1431px;top:890px">venders-dp</div>
<div class="rb" style="left:1464px;top:528px;width:111px;height:83px"></div>
<div class="rn" style="left:232px;top:248px">1</div>
<div class="rn" style="left:243px;top:366px">2</div>
<div class="rn" style="left:218px;top:395px">3</div>
<div class="rn" style="left:208px;top:427px">4</div>
<div class="rn" style="left:208px;top:448px">5</div>
<div class="rn" style="left:191px;top:470px">6</div>
<div class="rn" style="left:325px;top:571px">7</div>
<div class="rn" style="left:251px;top:765px">8</div>
<div class="rn" style="left:351px;top:845px">9</div>
<div class="rn" style="left:175px;top:871px;font-size:13px;letter-spacing:-0.5px">10</div>
</body></html>
